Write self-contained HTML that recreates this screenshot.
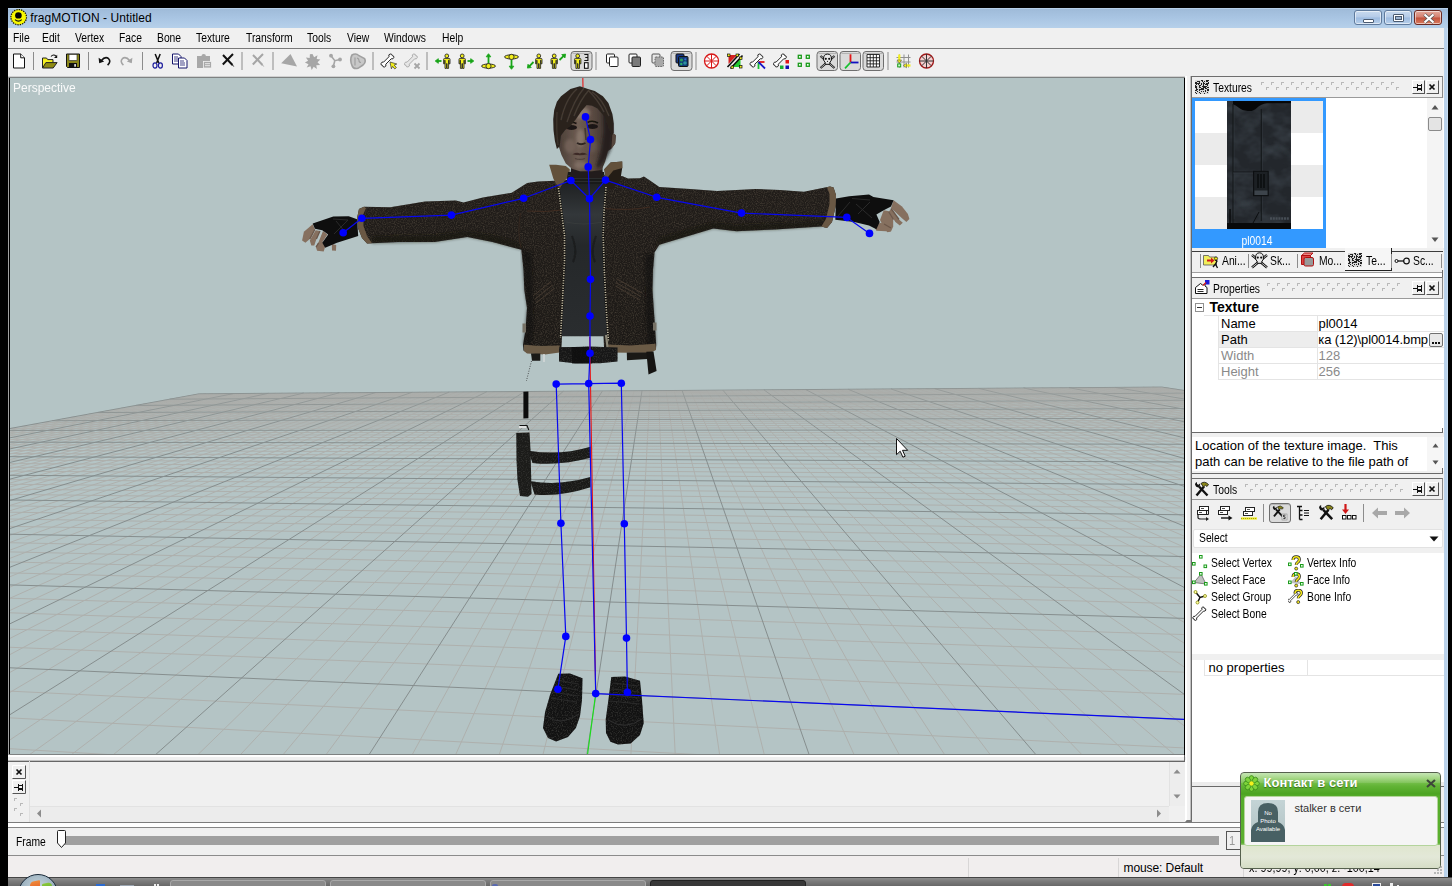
<!DOCTYPE html>
<html><head><meta charset="utf-8"><title>fragMOTION - Untitled</title>
<style>
*{box-sizing:border-box;margin:0;padding:0}
html,body{width:1452px;height:886px;overflow:hidden;background:#000}
body{font-family:"Liberation Sans",sans-serif;font-size:12px;color:#000;position:relative}
.abs{position:absolute}
#win{left:8px;top:8px;width:1440px;height:869px;background:#f0f0f0}
#title{left:0;top:0;width:1440px;height:20px;background:linear-gradient(#b6cfe9 0,#b6cfe9 1px,#9fbbd9 1px,#a9c5e3 50%,#b6d0ea 100%)}
#title .t{left:22.300px;top:2px;font-size:12px;line-height:16px;letter-spacing:0.07px;white-space:nowrap}
#rborder{left:1436px;top:20px;width:4px;height:849px;background:linear-gradient(90deg,#b9d1ea 0,#b9d1ea 70%,#c9def2 78%)}
#menu{left:0;top:20px;width:1436px;height:20px;background:#f0f0f0}
#menu span{position:absolute;top:3px;font-size:12px;line-height:14px;transform:scaleX(.86);transform-origin:0 0;white-space:nowrap}
#tbline{left:0;top:40px;width:1436px;height:1px;background:#7a7a7a}
#toolbar{left:0;top:41px;width:1436px;height:28px;background:#f0f0f0}
.sep{position:absolute;top:4px;width:1px;height:19px;background:#8a8a8a}
.pressed{position:absolute;top:1px;height:24px;border:1px solid #7a7a7a;border-radius:3px;background:#dcdcdc;box-shadow:inset 1px 1px 1px #aaa}
</style></head><body>
<style>
.cbtn{top:2px;height:15px;border:1px solid #5f7a9c;border-radius:3px;background:linear-gradient(#c9daee 0%,#b4cbe8 48%,#9dbbe0 52%,#b7cfea 100%);box-shadow:inset 0 0 0 1px rgba(255,255,255,.55)}
.cbtn i{position:absolute;border:1px solid #4a5a70;background:#fff;border-radius:1px}
.cbtn b{position:absolute;background:#9db4d2;border:1px solid #4a5a70;box-sizing:content-box;margin:-1px}
.cbtn.red{border-color:#6b2a22;background:linear-gradient(#e3a99b 0%,#d4806f 48%,#c2523c 52%,#d97a5e 100%)}
</style>
<style>
.nar{transform:scaleX(.86);transform-origin:0 0;white-space:nowrap;position:absolute;font-size:12px;line-height:14px}
.phead{position:absolute;left:1192px;width:1251px;height:21px}
.hd{position:absolute;left:1192px;width:251px;height:22px;background:#f0f0f0;border-top:1px solid #6e6e6e;border-right:1px solid #8a8a8a;border-bottom:1px solid #9a9a9a}
.hbtn{position:absolute;top:3px;width:13px;height:14px;border-right:1px solid #555;border-bottom:1px solid #555;border-left:1px solid #fff;border-top:1px solid #fff;background:#f0f0f0}
.grip{position:absolute;top:4px;height:12px}
.p13{position:absolute;font-size:13px;line-height:16px;white-space:nowrap}
.hl{position:absolute;height:1px;background:#e4e4e4}
.vl{position:absolute;width:1px;background:#e4e4e4}
</style>
<div id="win" class="abs">
<div id="title" class="abs">
 <svg class="abs" style="left:1.500px;top:1px" width="18" height="17" viewBox="0 0 18 17"><ellipse cx="8.700" cy="8.200" rx="7.800" ry="7.600" fill="#f8f800" stroke="#1a1a00" stroke-width="1.200" stroke-dasharray="1.400 1"/><ellipse cx="8.400" cy="6.400" rx="3.300" ry="3.200" fill="#050505"/><path d="M5 10.600Q8.400 13.800 11.800 10.600" fill="none" stroke="#111" stroke-width="1.100"/></svg>
 <div class="abs t">fragMOTION - Untitled</div>
 <div class="abs cbtn" style="left:1346px;width:28px"><i style="left:8px;top:8px;width:11px;height:4px"></i></div>
 <div class="abs cbtn" style="left:1376px;width:28px"><i style="left:8px;top:3px;width:11px;height:8px"></i><b style="left:11px;top:6px;width:5px;height:2px"></b></div>
 <div class="abs cbtn red" style="left:1406px;width:28px"><svg class="abs" style="left:8px;top:2px" width="12" height="11" viewBox="0 0 12 11"><path d="M1.5 1.5L10.5 9.5M10.5 1.5L1.5 9.5" stroke="#555" stroke-width="3.6"/><path d="M1.5 1.5L10.5 9.5M10.5 1.5L1.5 9.5" stroke="#fff" stroke-width="2.2"/></svg></div>
</div>
<div id="rborder" class="abs"></div>
<div id="menu" class="abs">
<span style="left:5px">File</span><span style="left:34px">Edit</span><span style="left:67px">Vertex</span><span style="left:111px">Face</span><span style="left:149px">Bone</span><span style="left:188px">Texture</span><span style="left:238px">Transform</span><span style="left:299px">Tools</span><span style="left:339px">View</span><span style="left:376px">Windows</span><span style="left:434px">Help</span>
</div>
<div id="tbline" class="abs"></div>
<div id="toolbar" class="abs">
<svg class="abs" style="left:0;top:0" width="1436" height="28" viewBox="0 0 1436 28"><g transform="translate(5,4.500)"><path d="M.5 .5h7.2l3.8 3.8v10.2h-11z" fill="#fff" stroke="#111"/><path d="M7.7 .5v3.8h3.8" fill="#fff" stroke="#111"/></g><rect x="25" y="3" width="1" height="18" fill="#8c8c8c"/><g transform="translate(34,4.500)"><path d="M.5 14.5V4.5h4l1.2 1.6h5.3v3" fill="#f4f01e" stroke="#222"/><path d="M.5 14.5l3.4-5.4h11.2l-3.9 5.4z" fill="#8e8a12" stroke="#222"/><path d="M9 3Q11.5 .2 14 2.6" fill="none" stroke="#111" stroke-width="1.1"/><path d="M15.2 1.2v3.2h-3.2z" fill="#111"/></g><g transform="translate(58,4.500)"><path d="M.5 .5h13v13.5h-12l-1-1z" fill="#8a861a" stroke="#111"/><rect x="3" y="1" width="8" height="6" fill="#fff" stroke="#222" stroke-width=".6"/><rect x="3" y="9.5" width="8" height="4.5" fill="#111"/><rect x="8.2" y="10.6" width="1.8" height="2.6" fill="#ddd"/></g><rect x="80" y="3" width="1" height="18" fill="#8c8c8c"/><g transform="translate(90,4.500)"><path d="M3.2 7.2Q7.2 2.4 10.6 5.2Q13.4 8 9.6 11.6" fill="none" stroke="#111" stroke-width="1.6"/><path d="M.6 4.2l.6 5.6 5-1.8z" fill="#111"/></g><g transform="translate(112,4.500)"><g transform="translate(13,0) scale(-1,1)"><path d="M3.2 7.2Q7.2 2.4 10.6 5.2Q13.4 8 9.6 11.6" fill="none" stroke="#a4a4a4" stroke-width="1.6"/><path d="M.6 4.2l.6 5.6 5-1.8z" fill="#a4a4a4"/></g></g><rect x="134" y="3" width="1" height="18" fill="#8c8c8c"/><g transform="translate(144,4.500)"><path d="M3.2 .5L6.8 9.5M8.2 .5L4.6 9.5" stroke="#111" stroke-width="1.5" fill="none"/><ellipse cx="3" cy="12" rx="2" ry="2.6" fill="none" stroke="#1c1c9c" stroke-width="1.2"/><ellipse cx="8.4" cy="12" rx="2" ry="2.6" fill="none" stroke="#1c1c9c" stroke-width="1.2"/></g><g transform="translate(164,4.500)"><path d="M.5 .5h6l2.5 2.5v7.5h-8.5z" fill="#fff" stroke="#14146a"/><path d="M2 3.5h4M2 5.5h5M2 7.5h5" stroke="#14146a" stroke-width=".8"/><path d="M6.5 4.5h6l2.5 2.5v7.5h-8.5z" fill="#fff" stroke="#14146a"/><path d="M8 7.5h4M8 9.5h5M8 11.5h5" stroke="#14146a" stroke-width=".8"/></g><g transform="translate(188,4.500)"><path d="M1 2.5h4.5q0-2 2.2-2t2.2 2H14v12H1z" fill="#a8a8a8"/><rect x="7.5" y="8" width="8" height="6.5" fill="#a8a8a8" stroke="#f0f0f0" stroke-width=".8"/><path d="M9 10.2h5M9 12.2h5" stroke="#f0f0f0" stroke-width=".9"/></g><g transform="translate(214,4.500)"><path d="M1 1.5L10.5 11.5M11 .5L.8 11" stroke="#111" stroke-width="2" fill="none"/><path d="M10.5 11.5l1.2 1.5" stroke="#111" stroke-width="1"/></g><rect x="233.5" y="3" width="1" height="18" fill="#8c8c8c"/><g transform="translate(244,4.500)"><path d="M1 1.5L10.5 11.5M11 .5L.8 11" stroke="#a6a6a6" stroke-width="2" fill="none"/><path d="M10.5 11.5l1.2 1.5" stroke="#a6a6a6" stroke-width="1"/></g><rect x="264.5" y="3" width="1" height="18" fill="#8c8c8c"/><g transform="translate(273,4.500)"><path d="M9.5 .5L16 13 .2 9.8z" fill="#a6a6a6"/></g><g transform="translate(296.5,4.500)"><path d="M8 .5l1.6 3.2 3.4-2-.8 3.8 3.6.6-2.8 2.6 2.6 2.8-3.8.2.6 3.8-3.2-2.2-2 3.2-1.2-3.8-3.8 1.4 1.8-3.4L.4 9l3.2-1.8L1.4 4l3.8.4.2-3.6z" fill="#a6a6a6"/></g><g transform="translate(321,4.500)"><path d="M2 2.2L5.8 7.2 11 6M5.8 7.2L4.4 12.6" stroke="#a6a6a6" stroke-width="1.6" fill="none"/><circle cx="2" cy="2.2" r="1.9" fill="#a6a6a6"/><circle cx="11" cy="6" r="1.9" fill="#a6a6a6"/><circle cx="4.4" cy="12.8" r="1.9" fill="#a6a6a6"/></g><g transform="translate(342,4.500)"><path d="M2 1.5Q6-.8 9 2.2L14.5 5Q16.5 8.5 13 11.5L8 14.8Q3 15.8 2 12Q-.5 6 2 1.5z" fill="#c8c8c8" stroke="#a0a0a0" stroke-width="1.6"/><path d="M5 4v8M7 4.5q2 .5 2 2.500t2 2" stroke="#a0a0a0" stroke-width="1.2" fill="none"/></g><rect x="364.5" y="3" width="1" height="18" fill="#8c8c8c"/><g transform="translate(373,4.500)"><g stroke="#111" stroke-width=".9" fill="#fff"><path d="M2.600 8.600L8 3.200Q7 .9 9.200 .5Q11.200 .3 11.200 2.100Q13.200 2.100 12.800 4.100Q12.300 5.900 10.200 5.300L4.800 10.700Q5.600 13 3.500 13.500Q1.500 13.700 1.500 11.900Q-.5 11.900 .1 9.900Q.7 8 2.600 8.600z"/></g><path d="M9 8.5l6.8 2-2.6 1 2.2 2.6-1.6 1.4-2.2-2.6-1.2 2.4z" fill="#f2ee1c" stroke="#333" stroke-width=".7"/></g><g transform="translate(396.5,4.500)"><g stroke="#a6a6a6" stroke-width=".9" fill="#e6e6e6"><path d="M2.600 8.600L8 3.200Q7 .9 9.200 .5Q11.200 .3 11.200 2.100Q13.200 2.100 12.800 4.100Q12.300 5.900 10.200 5.300L4.800 10.700Q5.600 13 3.500 13.500Q1.500 13.700 1.500 11.900Q-.5 11.900 .1 9.900Q.7 8 2.600 8.600z"/></g><path d="M10 10l5 5M15 10l-5 5" stroke="#a6a6a6" stroke-width="1.8"/></g><rect x="418.5" y="3" width="1" height="18" fill="#8c8c8c"/><g transform="translate(427,4.500)"><path d="M6.5 7.5L1.7 7.5" stroke="#18a418" stroke-width="1.8" fill="none"/><path d="M0.2 7.5L3.32446 5.16596L3.32446 9.83404z" fill="#18a418" stroke="#18a418" stroke-width=".8"/><g fill="#f2ee1c" stroke="#222" stroke-width=".85"><circle cx="11.8" cy="2.400" r="1.900"/><path d="M9.6 4.900h4.400q1 0 1 1v4.400h-1.100v-3.600h-.300v8.200h-1.500v-4.800h-.600v4.800h-1.500v-8.200h-.300v3.600h-1.100v-4.400q0-1 1-1z"/></g></g><g transform="translate(450,4.500)"><g fill="#f2ee1c" stroke="#222" stroke-width=".85"><circle cx="4.2" cy="2.400" r="1.900"/><path d="M2 4.900h4.400q1 0 1 1v4.400h-1.100v-3.600h-.300v8.200h-1.500v-4.800h-.600v4.800h-1.500v-8.200h-.300v3.600h-1.100v-4.400q0-1 1-1z"/></g><path d="M9.5 7.5L14.3 7.5" stroke="#18a418" stroke-width="1.8" fill="none"/><path d="M15.8 7.5L12.6755 9.83404L12.6755 5.16596z" fill="#18a418" stroke="#18a418" stroke-width=".8"/></g><g transform="translate(472.5,4.500)"><g fill="#f2ee1c" stroke="#222" stroke-width=".9"><ellipse cx="8" cy="12.6" rx="7" ry="2.1"/><circle cx="8" cy="12.6" r="2.6"/></g><path d="M8 9.5L8 1.7" stroke="#18a418" stroke-width="1.8" fill="none"/><path d="M8 0.2L10.334 3.32446L5.66596 3.32446z" fill="#18a418" stroke="#18a418" stroke-width=".8"/></g><g transform="translate(495.5,4.500)"><g fill="#f2ee1c" stroke="#222" stroke-width=".9"><ellipse cx="8" cy="3.4" rx="7" ry="2.1"/><circle cx="8" cy="3.4" r="2.6"/></g><path d="M8 6.5L8 14.3" stroke="#18a418" stroke-width="1.8" fill="none"/><path d="M8 15.8L5.66596 12.6755L10.334 12.6755z" fill="#18a418" stroke="#18a418" stroke-width=".8"/></g><g transform="translate(519,4.500)"><path d="M6.5 8.5L1.46066 13.5393" stroke="#18a418" stroke-width="1.8" fill="none"/><path d="M0.4 14.6L0.95891 10.7403L4.25974 14.0411z" fill="#18a418" stroke="#18a418" stroke-width=".8"/><g fill="#f2ee1c" stroke="#222" stroke-width=".85"><circle cx="11.8" cy="2.400" r="1.900"/><path d="M9.6 4.900h4.400q1 0 1 1v4.400h-1.100v-3.600h-.300v8.200h-1.500v-4.800h-.600v4.800h-1.500v-8.200h-.300v3.600h-1.100v-4.400q0-1 1-1z"/></g></g><g transform="translate(542,4.500)"><g fill="#f2ee1c" stroke="#222" stroke-width=".85"><circle cx="4.2" cy="2.400" r="1.900"/><path d="M2 4.900h4.400q1 0 1 1v4.400h-1.100v-3.600h-.300v8.200h-1.500v-4.800h-.600v4.800h-1.500v-8.200h-.300v3.600h-1.100v-4.400q0-1 1-1z"/></g><path d="M9.5 6.5L14.5218 1.64284" stroke="#18a418" stroke-width="1.8" fill="none"/><path d="M15.6 0.6L14.9768 4.44989L11.7315 1.09451z" fill="#18a418" stroke="#18a418" stroke-width=".8"/></g><rect x="563" y="2.500" width="21" height="19" rx="3" fill="#dadada" stroke="#6e6e6e"/><path d="M564.5 4.500h18" stroke="#b4b4b4"/><g transform="translate(565.5,4.500)"><g fill="#f2ee1c" stroke="#222" stroke-width=".85"><circle cx="4.2" cy="2.400" r="1.900"/><path d="M2 4.900h4.400q1 0 1 1v4.400h-1.100v-3.600h-.300v8.200h-1.500v-4.800h-.600v4.800h-1.500v-8.200h-.300v3.600h-1.100v-4.400q0-1 1-1z"/></g><path d="M10.8 1h3.6v3h-2.6 2.600v3h-3.600" fill="none" stroke="#111" stroke-width="1.1"/><rect x="11" y="9.200" width="3.6" height="5.6" fill="#fff" stroke="#111" stroke-width="1.1"/></g><rect x="587.5" y="3" width="1" height="18" fill="#8c8c8c"/><g transform="translate(598,4.500)"><rect x=".5" y=".5" width="8" height="9" rx="1" fill="#fff" stroke="#222"/><rect x="3.5" y="3.500" width="8.500" height="9.500" rx="1" fill="#fff" stroke="#222"/></g><g transform="translate(620.5,4.500)"><rect x=".5" y=".5" width="8" height="9" rx="1" fill="#fff" stroke="#222"/><rect x="3.5" y="3.500" width="8.500" height="9.500" rx="1" fill="#7a7a7a" stroke="#222"/></g><g transform="translate(643.5,4.500)"><rect x=".5" y=".5" width="8" height="9" rx="1" fill="#e8e8e8" stroke="#555"/><rect x="3.5" y="3.500" width="8.500" height="9.500" rx="1" fill="#a8a8a8" stroke="#666" stroke-dasharray="1.500 1"/></g><rect x="663" y="2.500" width="21" height="19" rx="3" fill="#dadada" stroke="#6e6e6e"/><path d="M664.5 4.500h18" stroke="#b4b4b4"/><g transform="translate(667.5,4.500)"><rect x=".5" y=".5" width="8" height="9" rx="1" fill="#1a3a8a" stroke="#111"/><rect x="3" y="3" width="9.500" height="10" rx="1" fill="#123c78" stroke="#111"/><circle cx="6" cy="6.500" r="1.600" fill="#2aa05a"/><circle cx="9.500" cy="9.500" r="1.800" fill="#2c8fa0"/><circle cx="9.800" cy="5.800" r="1.100" fill="#3a6ad0"/><circle cx="5.800" cy="10.500" r="1.200" fill="#2ab070"/></g><rect x="687.5" y="3" width="1" height="18" fill="#8c8c8c"/><g transform="translate(696,4.500)"><circle cx="7.500" cy="7.500" r="7" fill="#fff" stroke="#d81818" stroke-width="1.300"/><path d="M7.500 .5v14M.5 7.500h14M2.600 2.600l9.800 9.800M12.400 2.600l-9.800 9.800" stroke="#d81818" stroke-width="1"/></g><g transform="translate(719,4.500)"><path d="M1.500 1.500h8.500l-8.500 9z" fill="#d42020"/><path d="M13.500 4v9.500h-9.500z" fill="#22c832"/><path d="M.5 13.500L12.500 .5M3.500 15L15.500 2" stroke="#111" stroke-width="1.600"/><g fill="#f2ee1c" stroke="#111" stroke-width=".7"><rect x=".5" y=".5" width="2.500" height="2.500"/><rect x="9" y=".5" width="2.500" height="2.500"/><rect x="12.500" y="3.500" width="2.500" height="2.500"/><rect x="12.500" y="12" width="2.500" height="2.500"/><rect x="4" y="12.500" width="2.500" height="2.500"/></g></g><g transform="translate(742,4.500)"><g stroke="#111" stroke-width=".9" fill="#fff"><path d="M2.600 8.600L8 3.200Q7 .9 9.200 .5Q11.200 .3 11.200 2.100Q13.200 2.100 12.800 4.100Q12.300 5.900 10.200 5.300L4.800 10.700Q5.600 13 3.500 13.500Q1.500 13.700 1.500 11.900Q-.5 11.900 .1 9.900Q.7 8 2.600 8.600z"/></g><path d="M8.500 8.500h6" stroke="#e01818" stroke-width="1.800"/><path d="M8.500 8.500v7" stroke="#18c030" stroke-width="1.800"/><path d="M8.500 8.500l6.500 6.500" stroke="#1818c8" stroke-width="1.800"/></g><g transform="translate(765.5,4.500)"><g stroke="#111" stroke-width=".9" fill="#fff"><path d="M2.600 8.600L8 3.200Q7 .9 9.200 .5Q11.200 .3 11.200 2.100Q13.200 2.100 12.800 4.100Q12.300 5.900 10.200 5.300L4.800 10.700Q5.600 13 3.500 13.500Q1.500 13.700 1.500 11.900Q-.5 11.900 .1 9.900Q.7 8 2.600 8.600z"/></g><rect x="12" y="6.500" width="3.500" height="3.500" fill="#e01818"/><rect x="6.500" y="12" width="3.500" height="3.500" fill="#18b030"/><rect x="12" y="12" width="3.500" height="3.500" fill="#1010b0"/></g><g transform="translate(789.5,4.500)"><g fill="#f0fff0" stroke="#1a9a1a" stroke-width="1.300"><rect x=".8" y="1.800" width="3" height="3"/><rect x="8.800" y="1.800" width="3" height="3"/><rect x=".8" y="9.800" width="3" height="3"/><rect x="8.800" y="9.800" width="3" height="3"/></g></g><rect x="809" y="2.500" width="20.5" height="19" rx="3" fill="#dadada" stroke="#6e6e6e"/><path d="M810.5 4.500h17.5" stroke="#b4b4b4"/><rect x="832" y="2.500" width="20.5" height="19" rx="3" fill="#dadada" stroke="#6e6e6e"/><path d="M833.5 4.500h17.5" stroke="#b4b4b4"/><rect x="855" y="2.500" width="20.5" height="19" rx="3" fill="#dadada" stroke="#6e6e6e"/><path d="M856.5 4.500h17.5" stroke="#b4b4b4"/><g transform="translate(811.5,4.500)"><path d="M1 2.500L15 14.500M15 2.500L1 14.500" stroke="#111" stroke-width="2.200"/><path d="M1 2.500L15 14.500M15 2.500L1 14.500" stroke="#eee" stroke-width=".7"/><path d="M4 5.500Q4 .6 8 .6t4 4.900q0 2.200-1.600 3v2.300h-4.800v-2.300Q4 7.700 4 5.500z" fill="#e8e8e8" stroke="#111" stroke-width="1"/><circle cx="6.300" cy="5.300" r="1.100" fill="#111"/><circle cx="9.700" cy="5.300" r="1.100" fill="#111"/><path d="M8 7l-.7 1.400h1.400z" fill="#111"/></g><g transform="translate(834.5,4.500)"><path d="M8 9V.8" stroke="#e01818" stroke-width="1.800"/><path d="M8 9h8" stroke="#1010c0" stroke-width="1.800"/><path d="M8 9L2.500 14.800" stroke="#18c030" stroke-width="1.800"/></g><g transform="translate(858,4.500)"><rect x="1" y="1" width="12.500" height="12.500" fill="#fff"/><path d="M1 1h12.500M1 4.200h12.500M1 7.300h12.500M1 10.400h12.500M1 13.500h12.500M1 1v12.500M4.200 1v12.500M7.300 1v12.500M10.400 1v12.500M13.500 1v12.500" stroke="#111" stroke-width=".85"/></g><rect x="879.5" y="3" width="1" height="18" fill="#8c8c8c"/><g transform="translate(887.5,4.500)"><path d="M1 4h14M1 8.500h14M4 1v13M8.500 1v13M13 1v13" stroke="#909090" stroke-width="1"/><path d="M3.800 1v7" stroke="#f2ee1c" stroke-width="2.200"/><path d="M1.500 6.500h4.600l-2.300 3.200z" fill="#f2ee1c" stroke="#444" stroke-width=".5"/><path d="M15 12h-5" stroke="#f2ee1c" stroke-width="2.200"/><path d="M11 9.700v4.600l-3.200-2.300z" fill="#f2ee1c" stroke="#444" stroke-width=".5"/><rect x="2.200" y="10.400" width="3" height="3" fill="#caffca" stroke="#1a9a1a"/></g><g transform="translate(911,4.500)"><circle cx="7.500" cy="7.500" r="7" fill="#f4d0d0" stroke="#a01818" stroke-width="1.300"/><path d="M7.500 .5v14M.5 7.500h14M2.600 2.600l9.800 9.800M12.400 2.600l-9.800 9.800" stroke="#333" stroke-width="1"/></g></svg>
</div>
</div>
<!-- viewport border + canvas -->
<div class="abs" style="left:8px;top:76px;width:1177px;height:1px;background:#d0d0d0"></div>
<div class="abs" style="left:8px;top:77px;width:1px;height:678px;background:#a0a0a0"></div>
<div class="abs" style="left:9px;top:77px;width:1176px;height:678px;background:#7e8282"></div>
<div class="abs" style="left:9px;top:78px;width:1px;height:676px;background:#000"></div>
<div class="abs" style="left:1184px;top:78px;width:1px;height:677px;background:#000"></div>
<svg class="abs" id="vp" style="left:10px;top:78px" width="1174" height="676" viewBox="10 78 1174 676">
<defs>
<filter id="spk" x="0" y="0" width="100%" height="100%" color-interpolation-filters="sRGB"><feTurbulence type="fractalNoise" baseFrequency="0.9" numOctaves="2" seed="3" result="n"/><feColorMatrix in="n" type="matrix" values="0 0 0 0 0.30  0 0 0 0 0.27  0 0 0 0 0.23  1.700 0 0 0 -0.700" result="s"/><feComposite in="s" in2="SourceGraphic" operator="in" result="sp"/><feMerge><feMergeNode in="SourceGraphic"/><feMergeNode in="sp"/></feMerge></filter>
<filter id="spk2" x="0" y="0" width="100%" height="100%" color-interpolation-filters="sRGB"><feTurbulence type="fractalNoise" baseFrequency="0.8" numOctaves="2" seed="9" result="n"/><feColorMatrix in="n" type="matrix" values="0 0 0 0 0.22  0 0 0 0 0.22  0 0 0 0 0.21  2.400 0 0 0 -1.100" result="s"/><feComposite in="s" in2="SourceGraphic" operator="in" result="sp"/><feMerge><feMergeNode in="SourceGraphic"/><feMergeNode in="sp"/></feMerge></filter>
<filter id="soft"><feGaussianBlur stdDeviation="0.6"/></filter>
<filter id="soft2"><feGaussianBlur stdDeviation="1.6"/></filter>
<linearGradient id="face" x1="0" y1="0" x2="1" y2="0"><stop offset="0" stop-color="#4a3e37"/><stop offset=".35" stop-color="#6e5d53"/><stop offset=".6" stop-color="#5a4a42"/><stop offset="1" stop-color="#2c2521"/></linearGradient>
<linearGradient id="shirt" x1="0" y1="0" x2="0" y2="1"><stop offset="0" stop-color="#1d1f20"/><stop offset=".22" stop-color="#33373a"/><stop offset=".42" stop-color="#25282a"/><stop offset="1" stop-color="#2a2d2f"/></linearGradient>
<linearGradient id="jk" x1="0" y1="0" x2="0" y2="1"><stop offset="0" stop-color="#211d1a"/><stop offset="1" stop-color="#1c1916"/></linearGradient>
<linearGradient id="haze" gradientUnits="userSpaceOnUse" x1="0" y1="388" x2="0" y2="450"><stop offset="0" stop-color="#a8a9a6" stop-opacity=".55"/><stop offset=".35" stop-color="#a8a9a6" stop-opacity=".28"/><stop offset="1" stop-color="#a8a9a6" stop-opacity="0"/></linearGradient>
</defs>
<rect x="10" y="78" width="1174" height="676" fill="#b4c4c5"/>
<g fill="none" stroke-width="1" shape-rendering="auto">
<path stroke="#aeb0ad" d="M-1986.6 802.0L206.0 393.8M-1962.0 804.7L212.9 393.7M-1937.1 807.5L219.7 393.7M-1911.8 810.3L226.6 393.6M-1860.0 816.0L240.5 393.5M-1833.5 818.9L247.4 393.5M-1806.6 821.9L254.4 393.4M-1779.3 824.9L261.4 393.4M-1723.4 831.1L275.4 393.3M-1694.8 834.2L282.4 393.2M-1665.7 837.4L289.5 393.2M-1636.2 840.7L296.5 393.1M-1575.7 847.3L310.7 393.0M-1544.7 850.8L317.8 393.0M-1513.2 854.2L325.0 392.9M-1481.1 857.8L332.1 392.9M-1415.4 865.0L346.5 392.8M-1381.7 868.7L353.7 392.7M-1347.4 872.5L360.9 392.7M-1312.5 876.4L368.2 392.6M-1240.8 884.3L382.7 392.5M-1204.0 888.3L390.0 392.5M-1166.5 892.5L397.4 392.4M-1128.4 896.7L404.7 392.4M-1049.9 905.3L419.5 392.3M-1009.6 909.8L426.8 392.2M-968.5 914.3L434.3 392.2M-926.6 918.9L441.7 392.1M-840.4 928.4L456.6 392.0M-796.0 933.3L464.1 392.0M-750.8 938.3L471.6 391.9M-704.6 943.4L479.2 391.8M-609.4 953.9L494.3 391.7M-560.3 959.3L501.9 391.7M-510.2 964.8L509.5 391.6M-459.0 970.5L517.1 391.6M-353.3 982.1L532.5 391.5M-298.8 988.1L540.2 391.4M-243.0 994.3L547.9 391.4M-186.0 1000.6L555.6 391.3M-68.0 1013.6L571.1 391.2M-6.9 1020.3L578.9 391.2M55.5 1027.2L586.7 391.1M119.5 1034.3L594.6 391.0M252.0 1048.9L610.3 390.9M320.8 1056.5L618.2 390.9M391.2 1064.2L626.1 390.8M463.4 1072.2L634.1 390.8M613.4 1088.7L650.0 390.7M691.4 1097.3L658.0 390.6M771.4 1106.1L666.0 390.5M853.6 1115.2L674.1 390.5M1024.8 1134.1L690.2 390.4M1114.0 1143.9L698.3 390.3M1205.7 1154.0L706.5 390.3M1300.1 1164.4L714.6 390.2M1497.3 1186.2L731.0 390.1M1600.3 1197.5L739.2 390.0M1706.5 1209.2L747.5 390.0M1816.0 1221.3L755.7 389.9M2045.5 1246.6L772.3 389.8M2165.9 1259.9L780.7 389.7M2290.2 1273.6L789.0 389.7M2418.8 1287.8L797.4 389.6M2689.4 1317.6L814.2 389.5M2831.8 1333.3L822.7 389.4M2979.5 1349.6L831.1 389.4M3132.6 1366.5L839.6 389.3M3456.2 1402.2L856.7 389.2M3627.5 1421.1L865.3 389.2M3805.6 1440.7L873.9 389.1M3991.0 1461.1L882.5 389.0M4385.1 1504.6L899.8 388.9M4594.9 1527.7L908.5 388.8M4814.0 1551.9L917.2 388.8M5043.0 1577.1L925.9 388.7M5533.4 1631.2L943.4 388.6M5796.4 1660.2L952.2 388.5M6072.4 1690.6L961.1 388.5M6362.5 1722.6L969.9 388.4M6989.2 1791.7L987.7 388.3M7328.4 1829.1L996.7 388.2M7686.9 1868.7L1005.6 388.2M8066.2 1910.5L1014.6 388.1M8895.2 2001.9L1032.6 388.0M9349.4 2052.0L1041.7 387.9M9833.5 2105.4L1050.8 387.9M10350.6 2162.4L1059.9 387.8M11498.4 2288.9L1078.2 387.7M12137.6 2359.4L1087.4 387.6M12827.3 2435.5L1096.6 387.5M13573.7 2517.8L1105.8 387.5M15266.9 2704.5L1124.4 387.3M16232.5 2810.9L1133.7 387.3M17293.1 2927.9L1143.1 387.2M18463.4 3056.9L1152.5 387.1M-2010.8 799.4L19761.4 3200.0M-1833.2 766.8L13071.2 2188.2M-1677.7 738.2L9851.0 1701.2M-1418.6 690.7L6710.0 1226.2M-1309.6 670.7L5826.7 1092.6M-1211.4 652.7L5168.3 993.0M-1122.5 636.4L4658.6 915.9M-968.1 608.0L3920.9 804.3M-900.5 595.6L3645.3 762.7M-838.3 584.2L3412.7 727.5M-780.9 573.7L3213.6 697.4M-678.4 554.8L2890.8 648.6M-632.4 546.4L2758.1 628.5M-589.5 538.5L2640.3 610.7M-549.4 531.2L2534.9 594.7M-476.5 517.8L2354.6 567.5M-443.2 511.7L2276.8 555.7M-411.9 505.9L2205.8 545.0M-382.3 500.5L2140.7 535.1M-327.7 490.5L2025.8 517.7M-302.5 485.9L1974.7 510.0M-278.6 481.5L1927.3 502.8M-255.9 477.3L1883.2 496.2M-213.5 469.5L1803.5 484.1M-193.8 465.9L1767.4 478.7M-175.0 462.5L1733.5 473.5M-156.9 459.2L1701.7 468.7M-123.2 453.0L1643.2 459.9M-107.3 450.0L1616.4 455.8M-92.1 447.2L1591.0 452.0M-77.4 444.6L1566.9 448.3M-49.8 439.5L1522.2 441.6M-36.8 437.1L1501.5 438.4M-24.2 434.8L1481.7 435.4M-12.1 432.6L1462.8 432.6M10.9 428.4L1427.6 427.3M21.8 426.4L1411.1 424.8M32.3 424.4L1395.2 422.4M42.5 422.6L1380.1 420.1M61.9 419.0L1351.5 415.8M71.2 417.3L1338.1 413.7M80.2 415.6L1325.1 411.8M88.8 414.0L1312.7 409.9M105.5 411.0L1289.1 406.3M113.4 409.5L1277.9 404.6M121.2 408.1L1267.2 403.0M128.7 406.7L1256.7 401.4M143.1 404.1L1236.9 398.4M150.0 402.8L1227.5 397.0M156.7 401.6L1218.4 395.6M163.2 400.4L1209.6 394.3M175.8 398.1L1192.7 391.7M181.9 397.0L1184.6 390.5M187.8 395.9L1176.8 389.3M193.5 394.8L1169.2 388.2"/>
<path stroke="#868e8e" d="M-2010.8 799.4L199.2 393.8M-1886.1 813.1L233.5 393.6M-1751.6 828.0L268.4 393.3M-1606.2 844.0L303.6 393.1M-1448.5 861.4L339.3 392.8M-1276.9 880.3L375.5 392.6M-1089.5 901.0L412.1 392.3M-883.9 923.6L449.2 392.1M-657.5 948.6L486.7 391.8M-406.7 976.2L524.8 391.5M-127.6 1007.0L563.3 391.3M185.0 1041.5L602.4 391.0M537.5 1080.3L642.0 390.7M938.1 1124.5L682.1 390.4M1397.2 1175.2L722.8 390.1M1928.9 1233.8L764.0 389.9M2551.8 1302.5L805.8 389.6M3291.4 1384.0L848.2 389.3M4184.0 1482.4L891.1 389.0M5282.5 1603.6L934.7 388.7M6667.7 1756.3L978.8 388.4M8468.2 1954.8L1023.6 388.0M10904.2 2223.4L1069.0 387.7M14384.0 2607.1L1115.1 387.4M19761.4 3200.0L1161.9 387.1M-1540.6 713.1L7957.1 1414.8M-1041.8 621.5L4252.3 854.5M-727.7 563.9L3041.3 671.3M-511.8 524.3L2440.2 580.4M-354.2 495.4L2080.9 526.1M-234.2 473.3L1842.0 489.9M-139.7 456.0L1671.6 464.2M-63.4 442.0L1544.0 444.9M-0.4 430.4L1444.8 429.9M52.4 420.7L1365.5 417.9M97.3 412.5L1300.7 408.1M136.0 405.4L1246.7 399.9M169.6 399.2L1201.0 393.0M199.2 393.8L1161.9 387.1"/>
</g>
<path d="M199.2 393.8L1161.9 387.1L19761.4 3200.0L-2010.8 799.4z" fill="url(#haze)"/>
<g filter="url(#spk)"><path d="M549.4 181.0L538.0 181.5L527.2 183.1L511.7 192.8L482.8 197.6L463.5 202.4L455.8 200.5L425.0 201.5L390.3 207.2L364.0 206.8L359.0 209.0L357.3 217.0L358.0 228.0L362.0 238.0L367.1 243.5L372.0 243.3L398.0 242.0L434.6 242.0L467.4 237.1L492.5 242.0L521.4 249.7L523.5 270.0L524.3 290.0L527.0 308.0L525.5 330.0L523.0 344.8L523.5 350.5L527.0 352.5L559.1 351.0L608.5 351.5L650.0 351.5L656.0 349.5L656.2 344.8L653.7 308.0L652.5 290.0L653.0 270.0L654.5 252.6L659.3 244.8L685.0 237.0L713.3 228.5L736.4 231.3L775.0 229.4L821.3 226.5L827.0 228.0L832.0 222.0L836.0 205.0L836.0 195.0L833.5 187.5L830.0 186.5L803.9 191.8L780.0 190.0L755.7 188.9L717.1 190.9L690.0 189.0L659.3 187.0L650.0 180.5L643.9 176.4L640.0 178.3L628.0 178.5L622.0 176.0L605.0 180.0L570.0 180.0z" fill="url(#jk)"/></g>
<path d="M372.0 236.0L434.0 235.0L467.0 231.0L492.0 235.0L521.0 243.0L521.4 249.7L492.5 242.0L467.4 237.1L434.6 242.0L372.0 243.3z" fill="#141210" opacity=".55" filter="url(#soft2)"/>
<path d="M827.0 221.0L775.0 223.0L736.0 225.0L713.0 222.0L659.0 238.0L654.5 252.6L659.3 244.8L713.3 228.5L736.4 231.3L775.0 229.4L821.3 226.5z" fill="#141210" opacity=".55" filter="url(#soft2)"/>
<path d="M521.4 249.7L532.0 252.0L534.0 330.0L531.0 346.0L523.0 344.8L527.0 308.0L524.3 290.0z" fill="#100e0c" opacity=".5" filter="url(#soft2)"/>
<path d="M654.5 252.6L645.0 254.0L646.0 330.0L648.0 346.0L656.2 344.8L653.7 308.0L652.5 290.0z" fill="#100e0c" opacity=".5" filter="url(#soft2)"/>
<path d="M364.0 206.8L359.0 209.0L357.3 217.0L358.0 228.0L362.0 238.0L367.1 243.5L372.0 243.3L367.0 236.0L363.5 226.0L363.0 215.0L366.0 208.0z" fill="#6a5844"/>
<path d="M830.0 186.5L833.5 187.5L836.0 195.0L836.0 205.0L832.0 222.0L827.0 228.0L821.3 226.5L826.0 219.0L829.5 204.0L829.5 194.0L827.0 187.2z" fill="#6a5844"/>
<path d="M524.0 344.8L540.0 346.0L559.6 345.5L559.6 352.5L545.0 354.5L527.0 353.5L524.0 351.0z" fill="#6b5a45" filter="url(#soft)"/>
<path d="M608.0 344.5L630.0 345.5L655.5 343.7L656.0 350.0L650.0 353.0L609.0 352.5z" fill="#6b5a45" filter="url(#soft)"/>
<path d="M566.0 180.0L604.0 180.0L605.7 186.7L603.5 215.0L602.9 234.7L604.0 270.0L606.0 310.0L608.0 336.5L561.0 336.5L563.0 300.0L565.0 260.0L564.8 234.7L562.0 210.0L559.5 190.0z" fill="url(#shirt)"/>
<path d="M566 222Q584 226 602 222" stroke="#3a3d3d" stroke-width="1.2" fill="none" opacity=".8"/>
<path d="M572 236Q578 252 573 262M596 236Q590 252 595 262" stroke="#141515" stroke-width="2" fill="none" opacity=".6" filter="url(#soft)"/>
<path d="M562.0 336.3L603.5 336.3L604.0 347.3L561.5 347.3z" fill="#b4c4c5"/>
<path d="M558.5 188.0L561.5 212.0L564.5 235.0L564.5 262.0L562.5 300.0L560.5 338.0" fill="none" stroke="#0e0d0b" stroke-width="2.300"/>
<path d="M558.5 188.0L561.5 212.0L564.5 235.0L564.5 262.0L562.5 300.0L560.5 338.0" fill="none" stroke="#c4bca4" stroke-width="1.700" stroke-dasharray="1.200 1.300"/>
<path d="M606.0 187.0L604.0 212.0L603.2 235.0L604.3 270.0L606.3 310.0L608.5 342.0" fill="none" stroke="#0e0d0b" stroke-width="2.300"/>
<path d="M606.0 187.0L604.0 212.0L603.2 235.0L604.3 270.0L606.3 310.0L608.5 342.0" fill="none" stroke="#c4bca4" stroke-width="1.700" stroke-dasharray="1.200 1.300"/>
<path d="M527 211Q545 212.500 562 210M605 208.500Q628 211 650 207" stroke="#4a2f22" stroke-width=".9" fill="none" opacity=".8"/>
<path d="M533 296L551 281.500M534.5 299.500L552.5 285M536 303L554 288.500" stroke="#4c4034" stroke-width="1" fill="none" opacity=".8"/>
<path d="M617 279L642 293M616 282.500L641 296.500M615.5 286L640 300" stroke="#4c4034" stroke-width="1" fill="none" opacity=".8"/>
<path d="M520.500 213Q517 232 521 248" stroke="#3a2a20" stroke-width="1" fill="none" opacity=".7"/>
<rect x="522.500" y="323.500" width="3.500" height="9" fill="#777266"/><rect x="653" y="322.500" width="3.500" height="8" fill="#777266"/>
<g filter="url(#spk2)"><path d="M559.0 347.6L590.0 346.5L617.5 347.6L617.5 361.5L600.0 363.3L575.0 363.3L559.0 361.5z" fill="#171717"/></g>
<rect x="572" y="347" width="20" height="16.500" fill="#0e0e0e" opacity=".8"/>
<path d="M544 354v8" stroke="#d4d8d8" stroke-width="1.600"/>
<path d="M606 335l1.500 12" stroke="#8a8676" stroke-width="2.200"/>
<path d="M531.0 353.6L540.3 353.6L540.3 360.8L532.0 360.8z" fill="#1a1916"/>
<path d="M626.8 352.5L647.7 352.5L647.7 359.0L627.0 360.2z" fill="#1a1916"/>
<path d="M646.3 351.8L653.5 351.5L656.6 371.0L648.5 374.5z" fill="#151412"/>
<path d="M531.500 361L526.400 381" stroke="#333" stroke-width=".8" stroke-dasharray="1 1.500" fill="none"/>
<path d="M549.2 164.8L556.0 164.8L565.8 166.1L569.8 169.2L569.4 176.0L564.9 180.4L560.0 188.0L556.0 184.0L553.3 178.6z" fill="#64513b" filter="url(#soft)"/>
<path d="M604.3 169.2L610.6 162.5L622.2 161.6L622.2 167.9L620.4 179.5L612.0 190.0L606.5 187.0L606.0 180.0z" fill="#241d16"/>
<path d="M604.3 169.2L610.6 162.5L622.2 161.6L622.4 167.9L613.3 170.6L608.8 176.0L606.0 180.0z" fill="#64513b" filter="url(#soft)"/>
<path d="M568.0 172.0L604.0 172.0L606.0 184.0L566.0 184.0z" fill="#191a1a"/>
<path d="M568 175.500h37M567.500 178.500h38M567 181.500h38.500" stroke="#303232" stroke-width=".8"/>
<g filter="url(#soft)">
<path d="M572.0 160.0L602.0 160.0L603.0 178.0L570.0 178.0z" fill="#241f1c"/>
<path d="M558.2 128.0L558.6 146.0L561.5 155.0L565.8 163.4L572.0 168.8L580.0 171.2L592.1 171.2L601.6 170.0L605.2 161.6L607.9 151.0L611.1 149.1L615.1 143.7L615.8 135.6L612.4 132.9L611.1 116.6L600.0 104.0L581.3 102.0L566.0 110.0z" fill="url(#face)"/>
</g>
<g filter="url(#soft2)">
<ellipse cx="581" cy="113" rx="9" ry="6" fill="#8a7a6e" opacity=".9"/>
<ellipse cx="580.500" cy="138" rx="4" ry="9" fill="#8c7b6e" opacity=".8"/>
<ellipse cx="570" cy="146" rx="5.500" ry="7" fill="#75645a" opacity=".8"/>
<ellipse cx="592" cy="146" rx="5" ry="7" fill="#6a594f" opacity=".7"/>
<ellipse cx="581" cy="165" rx="7" ry="3.500" fill="#85746a" opacity=".75"/>
<path d="M603.0 112.0L611.1 116.6L612.4 132.9L611.1 149.1L607.0 157.3L600.2 166.8L596.0 168.0L601.0 150.0L603.5 132.0z" fill="#1f1a17" opacity=".8"/>
</g>
<g filter="url(#soft)">
<ellipse cx="571.500" cy="127.500" rx="5.500" ry="2.600" fill="#1e1815"/>
<ellipse cx="592.500" cy="126.500" rx="5.500" ry="2.600" fill="#1e1815"/>
<path d="M566 123.500q5-2.500 10.500 0M587.500 122.500q5-2.500 10.500 .5" stroke="#17120f" stroke-width="1.500" fill="none"/>
<path d="M577 143q4 2.500 8.500 0" stroke="#2e2520" stroke-width="1.800" fill="none"/>
<path d="M585 128l1 12" stroke="#3a2f29" stroke-width="1.500" fill="none" opacity=".8"/>
<path d="M572.500 154.200q4.500-2.400 7.300-.8q3-1.600 7.500 .8q-7.400 2.200-14.800 0z" fill="#3c2b27"/>
<path d="M575 158.500q5 1.800 10 0" stroke="#3a2e28" stroke-width="1.200" fill="none" opacity=".6"/>
<path d="M612.4 133.0L615.8 135.0L615.3 143.0L611.5 148.5z" fill="#56463d"/>
<path d="M554.2 109.9L556.9 101.7L561.0 96.3L570.4 88.9L579.9 86.2L588.0 88.9L594.8 90.9L602.9 96.3L608.4 103.1L612.4 113.9L613.8 123.4L613.8 132.9L611.7 135.6L608.4 127.5L604.3 116.6L597.5 108.5L592.1 105.8L586.7 105.1L581.3 111.2L575.9 119.3L570.4 126.1L565.0 130.2L561.0 135.6L559.6 146.4L556.9 149.1L554.9 141.0L553.5 130.2L553.2 119.3z" fill="#2a241f"/>
<path d="M577 89Q566 98 561 120M584 88Q574 100 567 122M589 90Q580 100 574 116M592 92Q602 98 609 116M588 90Q598 100 604 112" stroke="#4a4036" stroke-width="1.300" fill="none" opacity=".85"/>
<path d="M557 112Q556 130 558 145" stroke="#3e352d" stroke-width="1.500" fill="none" opacity=".8"/>
</g>
<g filter="url(#soft)">
<path d="M312.7 224.3L303.9 231.7L302.1 240.5L305.4 242.7L309.8 239.0L314.9 229.5z" fill="#86705f"/>
<path d="M315.7 230.2L309.8 240.5L311.3 245.6L314.3 245.6L316.4 239.0L320.0 231.0z" fill="#86705f"/>
<path d="M323.0 231.0L318.6 242.0L315.7 246.4L317.1 250.8L323.7 251.5L325.2 246.4L322.5 242.0L327.4 234.6z" fill="#86705f"/>
<path d="M331.8 244.0L336.2 244.9L336.0 250.8L332.0 250.5z" fill="#86705f"/>
<path d="M309.800 239l5-9.500M316.400 239l3.600-8M318.600 243l-2.500 4" stroke="#6b574a" stroke-width="1.300" fill="none"/>
</g>
<path d="M312.7 223.6L333.3 216.6L348.7 216.3L357.1 219.2L358.2 236.1L337.0 242.7L325.2 247.8L322.3 242.7L328.2 234.6L322.3 230.2L314.9 228.7z" fill="#0e0e0e"/>
<path d="M333 219l15 1M336 221l10 12M348 220l-14 14" stroke="#2a2a2a" stroke-width="1" fill="none"/>
<g filter="url(#soft)">
<path d="M893.6 200.3L902.0 206.5L907.9 213.9L909.4 219.0L906.4 222.0L902.0 218.3L891.0 208.0z" fill="#86705f"/>
<path d="M891.0 208.7L898.4 219.0L902.8 222.7L899.8 225.6L895.4 222.0L888.8 211.7z" fill="#86705f"/>
<path d="M883.7 210.2L888.1 211.0L893.2 219.0L893.2 226.4L891.0 231.5L887.4 232.2L883.0 226.0L880.0 220.0z" fill="#86705f"/>
<path d="M879.7 222.7L883.7 223.4L891.0 227.8L890.3 231.5L876.4 230.8L874.9 227.8z" fill="#86705f"/>
<path d="M891 208.500l8 11M888.500 211.500l5 8M884 224l7 4" stroke="#6b574a" stroke-width="1.300" fill="none"/>
</g>
<path d="M836.0 198.5L849.2 196.3L869.0 194.4L873.4 197.0L893.6 200.3L891.0 206.5L883.7 210.2L876.4 214.6L879.7 222.0L876.4 229.3L869.0 225.6L854.3 222.0L835.3 219.8z" fill="#0e0e0e"/>
<path d="M852 198.500l18 1.500M850 202l-12 14M856 204l16 14M870 202l-12 12" stroke="#2a2a2a" stroke-width="1" fill="none"/>
<path d="M523.4 391.8L528.4 391.5L528.4 418.2L523.4 418.5z" fill="#0c0c0c"/>
<path d="M519.500 425.500h7.500l1.800 4.500" stroke="#111" stroke-width="1.100" fill="none"/><path d="M519 427h7" stroke="#eee" stroke-width="1.600"/>
<g filter="url(#spk2)"><path d="M516.3 433.0L529.5 432.4L530.5 450.0L531.0 470.0L531.5 494.0L528.0 496.8L520.0 496.0L517.5 480.0L516.5 460.0z" fill="#1b1b19"/></g>
<g filter="url(#spk2)"><path d="M528.400 450.700Q560 456 590.400 446.700L590.400 457.800Q560 466 532.500 462.900z" fill="#191917"/><path d="M530.500 481.200Q560 486 590.400 477.100L590.400 487.300Q560 497 534.500 494.400z" fill="#191917"/></g>
<g filter="url(#spk2)"><path d="M558.3 673.8L570.0 673.5L582.5 678.2L582.0 700.0L580.0 716.0L575.9 728.0L568.0 737.0L556.1 741.5L548.0 738.0L543.0 728.0L545.1 712.0L550.0 695.0z" fill="#121212"/><path d="M611.3 677.0L625.0 676.5L640.0 680.7L642.0 700.0L643.7 723.2L640.0 735.0L630.7 743.6L618.0 744.5L610.4 741.7L606.0 733.0L605.7 719.5L608.0 703.0z" fill="#121212"/></g>
<path d="M547 716Q560 727 579 714M608 720Q625 731 642 719" stroke="#303030" stroke-width="1" fill="none"/>
<path d="M556 680l22 4M554 686l24 4M552 692l26 4M551 698l26 4M613 683l25 3M612 689l27 3M611 695l28 3M610 701l29 3" stroke="#2c2c2c" stroke-width="1.200" fill="none" opacity=".9"/>
<path d="M582.800 77L583 87M589.700 337L595.700 693.600" stroke="#e81818" stroke-width="1.100" fill="none"/>
<path d="M595.700 693.600L587.600 754" stroke="#18e018" stroke-width="1.100" fill="none"/>
<path d="M585.5 116.9L590.5 139.6M590.5 139.6L588.2 166.9M588.2 166.9L589.5 198.7M589.5 198.7L570.9 180.5M589.5 198.7L605.5 180.1M570.9 180.5L523.6 198.3M523.6 198.3L451.4 215.1M451.4 215.1L361.8 218.3M361.8 218.3L343.2 232.8M605.5 180.1L656.7 197.3M656.7 197.3L741.5 213.1M741.5 213.1L846.8 217.4M846.8 217.4L869.5 233.4M589.5 198.7L590.5 279.2M590.5 279.2L590.0 316.0M590.0 316.0L590.0 353.3M590.0 353.3L588.7 383.6M588.7 383.6L556.2 384.1M588.7 383.6L621.3 383.2M556.2 384.1L560.9 523.2M560.9 523.2L565.8 636.4M565.8 636.4L557.9 689.2M621.3 383.2L624.3 523.7M624.3 523.7L626.5 638.1M626.5 638.1L627.4 692.3M588.7 383.6L595.7 693.6M595.700 693.600L1184 719.400" stroke="#0808f0" stroke-width="1.200" fill="none"/>
<g fill="#0000ff"><circle cx="585.5" cy="116.9" r="3.800"/><circle cx="590.5" cy="139.6" r="3.800"/><circle cx="588.2" cy="166.9" r="3.800"/><circle cx="570.9" cy="180.5" r="3.800"/><circle cx="605.5" cy="180.1" r="3.800"/><circle cx="589.5" cy="198.7" r="3.800"/><circle cx="523.6" cy="198.3" r="3.800"/><circle cx="451.4" cy="215.1" r="3.800"/><circle cx="361.8" cy="218.3" r="3.800"/><circle cx="343.2" cy="232.8" r="3.800"/><circle cx="656.7" cy="197.3" r="3.800"/><circle cx="741.5" cy="213.1" r="3.800"/><circle cx="846.8" cy="217.4" r="3.800"/><circle cx="869.5" cy="233.4" r="3.800"/><circle cx="590.5" cy="279.2" r="3.800"/><circle cx="590.0" cy="316.0" r="3.800"/><circle cx="590.0" cy="353.3" r="3.800"/><circle cx="588.7" cy="383.6" r="3.800"/><circle cx="556.2" cy="384.1" r="3.800"/><circle cx="621.3" cy="383.2" r="3.800"/><circle cx="560.9" cy="523.2" r="3.800"/><circle cx="624.3" cy="523.7" r="3.800"/><circle cx="565.8" cy="636.4" r="3.800"/><circle cx="626.5" cy="638.1" r="3.800"/><circle cx="557.9" cy="689.2" r="3.800"/><circle cx="627.4" cy="692.3" r="3.800"/><circle cx="595.7" cy="693.6" r="3.800"/></g>
<path d="M896.500 438.500v16.200l3.700-3.500 2.700 6 2.300-1-2.700-5.900h5.200z" fill="#fff" stroke="#111" stroke-width="1"/>
</svg>
<div class="abs" style="left:13px;top:81px;font-size:12px;line-height:14px;color:#fff;opacity:.93">Perspective</div>
<div class="abs" style="left:1185px;top:76px;width:2px;height:746px;background:#fff"></div><div class="abs" style="left:1187px;top:76px;width:3px;height:746px;background:#f2f2f2"></div><div class="abs" style="left:1190px;top:76px;width:1px;height:746px;background:#c0c0c0"></div>
<div class="abs" style="left:1191px;top:76px;width:1px;height:746px;background:#6a6a6a"></div>
<div class="abs" style="left:1192px;top:76px;width:252px;height:712px;background:#f0f0f0"></div>
<div class="hd" style="top:76px"><div class="abs" style="left:2px;top:2px;width:16px;height:16px"><svg width="16" height="16" viewBox="0 0 16 16" shape-rendering="crispEdges"><rect x="1" y="1" width="14" height="14" fill="#d8d8d8"/><path d="M7 1h1v1h-1zM8 1h1v1h-1zM12 1h1v1h-1zM13 1h1v1h-1zM14 1h1v1h-1zM3 2h1v1h-1zM4 2h1v1h-1zM5 2h1v1h-1zM8 2h1v1h-1zM10 2h1v1h-1zM12 2h1v1h-1zM13 2h1v1h-1zM1 3h1v1h-1zM2 3h1v1h-1zM5 3h1v1h-1zM9 3h1v1h-1zM14 3h1v1h-1zM1 4h1v1h-1zM2 4h1v1h-1zM3 4h1v1h-1zM4 4h1v1h-1zM5 4h1v1h-1zM7 4h1v1h-1zM9 4h1v1h-1zM10 4h1v1h-1zM12 4h1v1h-1zM13 4h1v1h-1zM14 4h1v1h-1zM2 5h1v1h-1zM4 5h1v1h-1zM7 5h1v1h-1zM9 5h1v1h-1zM11 5h1v1h-1zM12 5h1v1h-1zM13 5h1v1h-1zM1 6h1v1h-1zM5 6h1v1h-1zM6 6h1v1h-1zM9 6h1v1h-1zM13 6h1v1h-1zM1 7h1v1h-1zM2 7h1v1h-1zM5 7h1v1h-1zM8 7h1v1h-1zM9 7h1v1h-1zM10 7h1v1h-1zM11 7h1v1h-1zM12 7h1v1h-1zM1 8h1v1h-1zM2 8h1v1h-1zM5 8h1v1h-1zM6 8h1v1h-1zM9 8h1v1h-1zM10 8h1v1h-1zM11 8h1v1h-1zM13 8h1v1h-1zM14 8h1v1h-1zM2 9h1v1h-1zM7 9h1v1h-1zM8 9h1v1h-1zM9 9h1v1h-1zM11 9h1v1h-1zM12 9h1v1h-1zM2 10h1v1h-1zM3 10h1v1h-1zM5 10h1v1h-1zM6 10h1v1h-1zM7 10h1v1h-1zM8 10h1v1h-1zM9 10h1v1h-1zM13 10h1v1h-1zM14 10h1v1h-1zM1 11h1v1h-1zM2 11h1v1h-1zM5 11h1v1h-1zM11 11h1v1h-1zM13 11h1v1h-1zM14 11h1v1h-1zM3 12h1v1h-1zM7 12h1v1h-1zM9 12h1v1h-1zM11 12h1v1h-1zM1 13h1v1h-1zM5 13h1v1h-1zM13 13h1v1h-1zM2 14h1v1h-1zM6 14h1v1h-1zM10 14h1v1h-1z" fill="#222"/></svg></div><div class="nar" style="left:21px;top:4px">Textures</div><div class="hbtn" style="left:220px"><svg width="11" height="12" viewBox="0 0 11 12" style="position:absolute;left:0;top:0"><path d="M0 6h4M4 2.500v7M4 4h5M4 8h5M8.500 2.500v7M4 7h5" stroke="#111" stroke-width="1" fill="none" shape-rendering="crispEdges"/></svg></div><div class="hbtn" style="left:234px"><svg width="11" height="12" viewBox="0 0 11 12" style="position:absolute;left:0;top:0"><path d="M2.500 3.500l5 5M7.500 3.500l-5 5" stroke="#111" stroke-width="1.700" fill="none"/></svg></div></div>
<svg class="abs" style="left:1260px;top:81px" width="144" height="12" viewBox="0 0 144 12"><g stroke="#b9b9b9" stroke-width="1" fill="none" shape-rendering="crispEdges"><path d="M1.5 3.5v-2.500h2.500"/><path d="M6.5 8.5v-2.500h2.500"/><path d="M11.5 3.5v-2.500h2.500"/><path d="M16.5 8.5v-2.500h2.500"/><path d="M21.5 3.5v-2.500h2.500"/><path d="M26.5 8.5v-2.500h2.500"/><path d="M31.5 3.5v-2.500h2.500"/><path d="M36.5 8.5v-2.500h2.500"/><path d="M41.5 3.5v-2.500h2.500"/><path d="M46.5 8.5v-2.500h2.500"/><path d="M51.5 3.5v-2.500h2.500"/><path d="M56.5 8.5v-2.500h2.500"/><path d="M61.5 3.5v-2.500h2.500"/><path d="M66.5 8.5v-2.500h2.500"/><path d="M71.5 3.5v-2.500h2.500"/><path d="M76.5 8.5v-2.500h2.500"/><path d="M81.5 3.5v-2.500h2.500"/><path d="M86.5 8.5v-2.500h2.500"/><path d="M91.5 3.5v-2.500h2.500"/><path d="M96.5 8.5v-2.500h2.500"/><path d="M101.5 3.5v-2.500h2.500"/><path d="M106.5 8.5v-2.500h2.500"/><path d="M111.5 3.5v-2.500h2.500"/><path d="M116.5 8.5v-2.500h2.500"/><path d="M121.5 3.5v-2.500h2.500"/><path d="M126.5 8.5v-2.500h2.500"/><path d="M131.5 3.5v-2.500h2.500"/><path d="M136.5 8.5v-2.500h2.500"/></g></svg>
<div class="abs" style="left:1192px;top:98px;width:252px;height:150px;background:#fff"></div>
<div class="abs" style="left:1192px;top:98px;width:134px;height:150px;background:#3399ff"></div>
<svg class="abs" style="left:1195px;top:101px" width="128" height="128" viewBox="0 0 128 128"><defs><filter id="tn" x="0" y="0" width="100%" height="100%" color-interpolation-filters="sRGB"><feTurbulence type="fractalNoise" baseFrequency="0.05 0.07" numOctaves="3" seed="7"/><feColorMatrix type="matrix" values="0 0 0 0 0.24  0 0 0 0 0.27  0 0 0 0 0.30  1.800 0 0 0 -0.700"/><feComposite in2="SourceGraphic" operator="in"/></filter><filter id="tb"><feGaussianBlur stdDeviation="1.500"/></filter><linearGradient id="tg" x1="0" y1="0" x2="1" y2="1"><stop offset="0" stop-color="#20242a"/><stop offset=".5" stop-color="#2e343b"/><stop offset="1" stop-color="#1b1e23"/></linearGradient></defs><rect width="128" height="128" fill="#fff"/><rect x="32" y="0" width="32" height="32" fill="#ebebeb"/><rect x="96" y="0" width="32" height="32" fill="#ebebeb"/><rect x="0" y="32" width="32" height="32" fill="#ebebeb"/><rect x="64" y="32" width="32" height="32" fill="#ebebeb"/><rect x="32" y="64" width="32" height="32" fill="#ebebeb"/><rect x="96" y="64" width="32" height="32" fill="#ebebeb"/><rect x="0" y="96" width="32" height="32" fill="#ebebeb"/><rect x="64" y="96" width="32" height="32" fill="#ebebeb"/><rect x="32" y="0" width="64" height="128" fill="#23272c"/><rect x="32" y="0" width="64" height="128" fill="#000" filter="url(#tn)"/><g transform="translate(32,0)"><path d="M6 0h58v2.200h-24q-6 .5-10 4.500t-9 3.300q-6-.5-9.500-3.500t-5.500-3z" fill="#060708"/><path d="M6 3v121M34.300 8v112" stroke="#15181b" stroke-width="1.100" fill="none"/><path d="M7.200 8v110M35.500 12v100" stroke="#353b41" stroke-width=".7" fill="none" opacity=".7"/><path d="M6 71h20.600" stroke="#14171a" stroke-width="1"/><path d="M6 72h20" stroke="#3a4046" stroke-width=".6"/><rect x="26.600" y="70.300" width="14.600" height="24.400" fill="#1c2024" stroke="#0c0e10" stroke-width="1"/><path d="M31 73v14M34 73v14M37 73v14" stroke="#090a0b" stroke-width="1.300"/><rect x="27.500" y="89.500" width="13" height="4.500" fill="#3d444b"/><path d="M26 122l6-11" stroke="#0c0e10" stroke-width="1"/><path d="M43 117.500h19" stroke="#474e55" stroke-width="2.500" stroke-dasharray="2 .8"/><path d="M12 20q10 8 20 2M38 50q12-8 24 2M10 100q6 6 14 0" stroke="#363c42" stroke-width="2.500" fill="none" opacity=".55" filter="url(#tb)"/><rect x="0" y="122" width="64" height="6" fill="#08090a"/><path d="M3 108v14" stroke="#0a0b0c" stroke-width="1.500"/></g></svg>
<div class="abs" style="left:1192px;top:234px;width:131px;height:14px;text-align:center;color:#fff"><span style="display:inline-block;transform:scaleX(.86);font-size:12px;line-height:14px">pl0014</span></div>
<div class="abs" style="left:1427px;top:98px;width:16px;height:150px;background:#f4f4f4"></div>
<svg class="abs" style="left:1427px;top:98px" width="16" height="150" viewBox="0 0 16 150"><path d="M4.500 11.500L8 7l3.500 4.500z" fill="#555"/><path d="M4.500 139.500L8 144l3.500-4.500z" fill="#555"/><rect x="1.500" y="19.500" width="13" height="13" rx="1.500" fill="#e4e4e4" stroke="#8a8a8a"/></svg>
<div class="abs" style="left:1192px;top:248px;width:251px;height:24px;background:#f0f0f0"></div>
<div class="abs" style="left:1192px;top:251px;width:153px;height:1px;background:#3c3c3c"></div>
<div class="abs" style="left:1392px;top:251px;width:51px;height:1px;background:#3c3c3c"></div>
<div class="abs" style="left:1345px;top:248px;width:47px;height:23px;background:#f6f6f6;border-right:1px solid #222;border-bottom:1px solid #222"></div>
<div class="abs" style="left:1203px;top:252px;width:17px;height:17px"><svg width="17" height="17" viewBox="0 0 17 17"><path d="M.5 3.500h5l1 1.500h7v8h-13z" fill="#f2ee5a" stroke="#555" stroke-width=".8"/><path d="M4 8.500h5" stroke="#d01818" stroke-width="2"/><path d="M8 5.500l3.500 3-3.500 3z" fill="#d01818"/><path d="M12 8l2 1-1.500 3 2 4M12.500 12l-2.500 3" stroke="#111" stroke-width="1.300" fill="none"/><circle cx="13" cy="6.500" r="1.600" fill="#f2ee1c" stroke="#111" stroke-width=".7"/></svg></div>
<div class="nar" style="left:1222px;top:254px">Ani...</div>
<div class="abs" style="left:1200px;top:254px;width:1px;height:14px;background:#8c8c8c"></div>
<div class="abs" style="left:1251px;top:252px;width:17px;height:17px"><svg width="17" height="17" viewBox="0 0 17 17"><path d="M1 3L16 15.500M16 3L1 15.500" stroke="#111" stroke-width="2.400"/><path d="M1 3L16 15.500M16 3L1 15.500" stroke="#eee" stroke-width=".8"/><path d="M4.500 6Q4.500 .8 8.500 .8t4 5.200q0 2.200-1.600 3v2.300h-4.800v-2.300Q4.500 8.200 4.500 6z" fill="#e8e8e8" stroke="#111" stroke-width="1"/><circle cx="6.800" cy="5.600" r="1.100" fill="#111"/><circle cx="10.200" cy="5.600" r="1.100" fill="#111"/></svg></div>
<div class="nar" style="left:1270px;top:254px">Sk...</div>
<div class="abs" style="left:1248px;top:254px;width:1px;height:14px;background:#8c8c8c"></div>
<div class="abs" style="left:1300px;top:252px;width:17px;height:17px"><svg width="17" height="17" viewBox="0 0 17 17"><path d="M1.500 3.500l3-2.500h8.500l-2.500 2.500z" fill="#e88" stroke="#b01010" stroke-width="1"/><path d="M1.500 3.500h9v9h-9z" fill="#d44" stroke="#b01010" stroke-width="1"/><rect x="4" y="5.500" width="9.500" height="8.500" rx="1.500" fill="#999" stroke="#b01010" stroke-width="1"/></svg></div>
<div class="nar" style="left:1319px;top:254px">Mo...</div>
<div class="abs" style="left:1297px;top:254px;width:1px;height:14px;background:#8c8c8c"></div>
<div class="abs" style="left:1347px;top:252px;width:17px;height:17px"><svg width="16" height="16" viewBox="0 0 16 16" shape-rendering="crispEdges"><rect x="1" y="1" width="14" height="14" fill="#d8d8d8"/><path d="M7 1h1v1h-1zM8 1h1v1h-1zM12 1h1v1h-1zM13 1h1v1h-1zM14 1h1v1h-1zM3 2h1v1h-1zM4 2h1v1h-1zM5 2h1v1h-1zM8 2h1v1h-1zM10 2h1v1h-1zM12 2h1v1h-1zM13 2h1v1h-1zM1 3h1v1h-1zM2 3h1v1h-1zM5 3h1v1h-1zM9 3h1v1h-1zM14 3h1v1h-1zM1 4h1v1h-1zM2 4h1v1h-1zM3 4h1v1h-1zM4 4h1v1h-1zM5 4h1v1h-1zM7 4h1v1h-1zM9 4h1v1h-1zM10 4h1v1h-1zM12 4h1v1h-1zM13 4h1v1h-1zM14 4h1v1h-1zM2 5h1v1h-1zM4 5h1v1h-1zM7 5h1v1h-1zM9 5h1v1h-1zM11 5h1v1h-1zM12 5h1v1h-1zM13 5h1v1h-1zM1 6h1v1h-1zM5 6h1v1h-1zM6 6h1v1h-1zM9 6h1v1h-1zM13 6h1v1h-1zM1 7h1v1h-1zM2 7h1v1h-1zM5 7h1v1h-1zM8 7h1v1h-1zM9 7h1v1h-1zM10 7h1v1h-1zM11 7h1v1h-1zM12 7h1v1h-1zM1 8h1v1h-1zM2 8h1v1h-1zM5 8h1v1h-1zM6 8h1v1h-1zM9 8h1v1h-1zM10 8h1v1h-1zM11 8h1v1h-1zM13 8h1v1h-1zM14 8h1v1h-1zM2 9h1v1h-1zM7 9h1v1h-1zM8 9h1v1h-1zM9 9h1v1h-1zM11 9h1v1h-1zM12 9h1v1h-1zM2 10h1v1h-1zM3 10h1v1h-1zM5 10h1v1h-1zM6 10h1v1h-1zM7 10h1v1h-1zM8 10h1v1h-1zM9 10h1v1h-1zM13 10h1v1h-1zM14 10h1v1h-1zM1 11h1v1h-1zM2 11h1v1h-1zM5 11h1v1h-1zM11 11h1v1h-1zM13 11h1v1h-1zM14 11h1v1h-1zM3 12h1v1h-1zM7 12h1v1h-1zM9 12h1v1h-1zM11 12h1v1h-1zM1 13h1v1h-1zM5 13h1v1h-1zM13 13h1v1h-1zM2 14h1v1h-1zM6 14h1v1h-1zM10 14h1v1h-1z" fill="#222"/></svg></div>
<div class="nar" style="left:1366px;top:254px">Te...</div>
<div class="abs" style="left:1394px;top:252px;width:17px;height:17px"><svg width="17" height="17" viewBox="0 0 17 17"><circle cx="2.500" cy="9" r="1.500" fill="none" stroke="#111" stroke-width="1"/><path d="M4 9h6" stroke="#111" stroke-width="1.300"/><circle cx="12.500" cy="9" r="2.800" fill="none" stroke="#111" stroke-width="1.200"/></svg></div>
<div class="nar" style="left:1413px;top:254px">Sc...</div>
<div class="abs" style="left:1391px;top:254px;width:1px;height:14px;background:#8c8c8c"></div>
<div class="abs" style="left:1441px;top:254px;width:1px;height:14px;background:#8c8c8c"></div>
<div class="abs" style="left:1192px;top:272px;width:251px;height:1px;background:#a0a0a0"></div>
<div class="abs" style="left:1192px;top:273px;width:251px;height:4px;background:#fff"></div>
<div class="abs" style="left:1442px;top:270px;width:1px;height:7px;background:#6a6a6a"></div>
<div class="hd" style="top:277px"><div class="abs" style="left:2px;top:2px;width:16px;height:16px"><svg width="16" height="16" viewBox="0 0 16 16"><path d="M1.500 7.500l5-4 2 1.500 2.500-1v2l2 1.500v6h-11.500z" fill="#fff" stroke="#111" stroke-width="1"/><path d="M3.500 9.500h6M3.500 11.500h6" stroke="#111" stroke-width=".9"/><rect x="11" y="0" width="4.500" height="4.500" fill="#1a1ad8"/><path d="M9 5.500l3-3" stroke="#e02020" stroke-width="1.200"/></svg></div><div class="nar" style="left:21px;top:4px">Properties</div><div class="hbtn" style="left:220px"><svg width="11" height="12" viewBox="0 0 11 12" style="position:absolute;left:0;top:0"><path d="M0 6h4M4 2.500v7M4 4h5M4 8h5M8.500 2.500v7M4 7h5" stroke="#111" stroke-width="1" fill="none" shape-rendering="crispEdges"/></svg></div><div class="hbtn" style="left:234px"><svg width="11" height="12" viewBox="0 0 11 12" style="position:absolute;left:0;top:0"><path d="M2.500 3.500l5 5M7.500 3.500l-5 5" stroke="#111" stroke-width="1.700" fill="none"/></svg></div></div>
<svg class="abs" style="left:1266px;top:282px" width="138" height="12" viewBox="0 0 138 12"><g stroke="#b9b9b9" stroke-width="1" fill="none" shape-rendering="crispEdges"><path d="M1.5 3.5v-2.500h2.500"/><path d="M6.5 8.5v-2.500h2.500"/><path d="M11.5 3.5v-2.500h2.500"/><path d="M16.5 8.5v-2.500h2.500"/><path d="M21.5 3.5v-2.500h2.500"/><path d="M26.5 8.5v-2.500h2.500"/><path d="M31.5 3.5v-2.500h2.500"/><path d="M36.5 8.5v-2.500h2.500"/><path d="M41.5 3.5v-2.500h2.500"/><path d="M46.5 8.5v-2.500h2.500"/><path d="M51.5 3.5v-2.500h2.500"/><path d="M56.5 8.5v-2.500h2.500"/><path d="M61.5 3.5v-2.500h2.500"/><path d="M66.5 8.5v-2.500h2.500"/><path d="M71.5 3.5v-2.500h2.500"/><path d="M76.5 8.5v-2.500h2.500"/><path d="M81.5 3.5v-2.500h2.500"/><path d="M86.5 8.5v-2.500h2.500"/><path d="M91.5 3.5v-2.500h2.500"/><path d="M96.5 8.5v-2.500h2.500"/><path d="M101.5 3.5v-2.500h2.500"/><path d="M106.5 8.5v-2.500h2.500"/><path d="M111.5 3.5v-2.500h2.500"/><path d="M116.5 8.5v-2.500h2.500"/><path d="M121.5 3.5v-2.500h2.500"/><path d="M126.5 8.5v-2.500h2.500"/><path d="M131.5 3.5v-2.500h2.500"/></g></svg>
<div class="abs" style="left:1192px;top:299px;width:252px;height:133px;background:#fff"></div>
<div class="abs" style="left:1195px;top:303px;width:9px;height:9px;border:1px solid #919191;background:#fff"></div><div class="abs" style="left:1197px;top:307px;width:5px;height:1px;background:#333"></div>
<div class="abs" style="left:1209.500px;top:299px;font-size:14px;line-height:16px;font-weight:bold">Texture</div>
<div class="hl" style="left:1204px;top:315px;width:240px"></div>
<div class="abs" style="left:1219px;top:332px;width:98px;height:15px;background:#ededed"></div>
<div class="p13" style="left:1221px;top:315.5px;color:#000">Name</div>
<div class="p13" style="left:1318.500px;top:316px;color:#000">pl0014</div>
<div class="hl" style="left:1218px;top:331px;width:226px"></div>
<div class="p13" style="left:1221px;top:331.5px;color:#000">Path</div>
<div class="hl" style="left:1218px;top:347px;width:226px"></div>
<div class="p13" style="left:1221px;top:347.5px;color:#8a8a8a">Width</div>
<div class="p13" style="left:1318.500px;top:348px;color:#8a8a8a">128</div>
<div class="hl" style="left:1218px;top:363px;width:226px"></div>
<div class="p13" style="left:1221px;top:363.5px;color:#8a8a8a">Height</div>
<div class="p13" style="left:1318.500px;top:364px;color:#8a8a8a">256</div>
<div class="hl" style="left:1218px;top:379px;width:226px"></div>
<div class="abs" style="left:1318px;top:332px;width:111px;height:15px;overflow:hidden"><div class="p13" style="right:1px;top:0;letter-spacing:-.1px">ка (12)\pl0014.bmp</div></div>
<div class="vl" style="left:1218px;top:316px;height:64px"></div><div class="vl" style="left:1317px;top:316px;height:64px"></div>
<div class="abs" style="left:1429px;top:333px;width:14px;height:14px;border:1px solid #707070;border-radius:2px;background:#e8e8e8"><div class="abs" style="left:2px;top:8px;width:2px;height:2px;background:#111;box-shadow:3px 0 #111,6px 0 #111"></div></div>
<div class="abs" style="left:1192px;top:432px;width:251px;height:1px;background:#6a6a6a"></div>
<div class="abs" style="left:1192px;top:433px;width:251px;height:4px;background:#f0f0f0"></div>
<div class="abs" style="left:1442px;top:428px;width:1px;height:5px;background:#6a6a6a"></div>
<div class="abs" style="left:1192px;top:437px;width:252px;height:34px;background:#fff"></div>
<div class="p13" style="left:1195px;top:438px">Location of the texture image.&nbsp; This</div>
<div class="p13" style="left:1195px;top:454px">path can be relative to the file path of</div>
<div class="abs" style="left:1427px;top:437px;width:16px;height:34px;background:#f6f6f6"></div>
<svg class="abs" style="left:1427px;top:437px" width="16" height="34" viewBox="0 0 16 34"><path d="M5.500 10.500L8.500 6.500l3 4z" fill="#555"/><path d="M5.500 23.500L8.500 27.500l3-4z" fill="#555"/></svg>
<div class="abs" style="left:1192px;top:471px;width:251px;height:6px;background:#f0f0f0"></div>
<div class="abs" style="left:1192px;top:473px;width:251px;height:1px;background:#6a6a6a"></div>
<div class="abs" style="left:1442px;top:468px;width:1px;height:6px;background:#6a6a6a"></div>
<div class="hd" style="top:478px"><div class="abs" style="left:2px;top:2px;width:16px;height:16px"><svg width="16" height="16" viewBox="0 0 16 16"><path d="M2.500 14.500L10 5.500" stroke="#111" stroke-width="2.400"/><path d="M7 2.500q3.500-3 7.500 1l-1.500 2-1.500-1.200-2 1.700z" fill="#8a861a" stroke="#111" stroke-width=".8"/><path d="M13.500 14.500L5 5.500" stroke="#111" stroke-width="2.400"/><path d="M1 3.500q0-2 2-2.500v2l1.500 .8 1.500-1.300q.8 2-1 3.200t-3-.2z" fill="#111"/></svg></div><div class="nar" style="left:21px;top:4px">Tools</div><div class="hbtn" style="left:220px"><svg width="11" height="12" viewBox="0 0 11 12" style="position:absolute;left:0;top:0"><path d="M0 6h4M4 2.500v7M4 4h5M4 8h5M8.500 2.500v7M4 7h5" stroke="#111" stroke-width="1" fill="none" shape-rendering="crispEdges"/></svg></div><div class="hbtn" style="left:234px"><svg width="11" height="12" viewBox="0 0 11 12" style="position:absolute;left:0;top:0"><path d="M2.500 3.500l5 5M7.500 3.500l-5 5" stroke="#111" stroke-width="1.700" fill="none"/></svg></div></div>
<svg class="abs" style="left:1244px;top:483px" width="160" height="12" viewBox="0 0 160 12"><g stroke="#b9b9b9" stroke-width="1" fill="none" shape-rendering="crispEdges"><path d="M1.5 3.5v-2.500h2.500"/><path d="M6.5 8.5v-2.500h2.500"/><path d="M11.5 3.5v-2.500h2.500"/><path d="M16.5 8.5v-2.500h2.500"/><path d="M21.5 3.5v-2.500h2.500"/><path d="M26.5 8.5v-2.500h2.500"/><path d="M31.5 3.5v-2.500h2.500"/><path d="M36.5 8.5v-2.500h2.500"/><path d="M41.5 3.5v-2.500h2.500"/><path d="M46.5 8.5v-2.500h2.500"/><path d="M51.5 3.5v-2.500h2.500"/><path d="M56.5 8.5v-2.500h2.500"/><path d="M61.5 3.5v-2.500h2.500"/><path d="M66.5 8.5v-2.500h2.500"/><path d="M71.5 3.5v-2.500h2.500"/><path d="M76.5 8.5v-2.500h2.500"/><path d="M81.5 3.5v-2.500h2.500"/><path d="M86.5 8.5v-2.500h2.500"/><path d="M91.5 3.5v-2.500h2.500"/><path d="M96.5 8.5v-2.500h2.500"/><path d="M101.5 3.5v-2.500h2.500"/><path d="M106.5 8.5v-2.500h2.500"/><path d="M111.5 3.5v-2.500h2.500"/><path d="M116.5 8.5v-2.500h2.500"/><path d="M121.5 3.5v-2.500h2.500"/><path d="M126.5 8.5v-2.500h2.500"/><path d="M131.5 3.5v-2.500h2.500"/><path d="M136.5 8.5v-2.500h2.500"/><path d="M141.5 3.5v-2.500h2.500"/><path d="M146.5 8.5v-2.500h2.500"/><path d="M151.5 3.5v-2.500h2.500"/><path d="M156.5 8.5v-2.500h2.500"/></g></svg>
<div class="abs" style="left:1192px;top:500px;width:251px;height:53px;background:#f0f0f0"></div>
<svg class="abs" style="left:1196px;top:505px" width="16" height="16" viewBox="0 0 16 16"><rect x="3.500" y="1.500" width="9" height="4" fill="#fff" stroke="#222" stroke-width="1"/><rect x="1.500" y="5.500" width="9" height="4" fill="#fff" stroke="#222" stroke-width="1"/><path d="M5 3.500h3M3 7.500h3" stroke="#222" stroke-width=".8"/><path d="M2 9.500v3q0 1.500 3 1.500h6" stroke="#222" stroke-width="1.200" fill="none"/><path d="M10 12l3 2-3 2z" fill="#222"/><path d="M12.500 5.500v4h-9" stroke="#222" stroke-width="1" fill="none"/></svg>
<svg class="abs" style="left:1217px;top:505px" width="16" height="16" viewBox="0 0 16 16"><rect x="3.500" y="1.500" width="9" height="4" fill="#fff" stroke="#222" stroke-width="1"/><rect x="1.500" y="5.500" width="9" height="4" fill="#fff" stroke="#222" stroke-width="1"/><path d="M5 3.500h3M3 7.500h3" stroke="#222" stroke-width=".8"/><path d="M4 13h9" stroke="#111" stroke-width="1.400"/><path d="M11.500 10.500l4 2.500-4 2.500z" fill="#111"/></svg>
<svg class="abs" style="left:1241px;top:505px" width="16" height="16" viewBox="0 0 16 16"><g transform="translate(1,1)"><rect x="3.500" y="1.500" width="9" height="4" fill="#fff" stroke="#222" stroke-width="1"/><rect x="1.500" y="5.500" width="9" height="4" fill="#fff" stroke="#222" stroke-width="1"/><path d="M5 3.500h3M3 7.500h3" stroke="#222" stroke-width=".8"/></g><path d="M0 13.500h16" stroke="#f2ee1c" stroke-width="2.200"/><path d="M0 13.500h16" stroke="#8a8a1a" stroke-width=".8" stroke-dasharray="1 1"/></svg>
<div class="abs" style="left:1263px;top:504px;width:1px;height:18px;background:#8c8c8c"></div>
<div class="abs" style="left:1269px;top:503px;width:22px;height:20px;border:1px solid #6e6e6e;border-radius:3px;background:#dadada;box-shadow:inset 0 1px 0 #b8b8b8"></div>
<svg class="abs" style="left:1272px;top:505px" width="16" height="16" viewBox="0 0 16 16"><g transform="scale(.78)"><path d="M2.500 14.500L10 5.500" stroke="#111" stroke-width="2.400"/><path d="M7 2.500q3.500-3 7.500 1l-1.500 2-1.500-1.200-2 1.700z" fill="#8a861a" stroke="#111" stroke-width=".8"/><path d="M13.500 14.500L5 5.500" stroke="#111" stroke-width="2.400"/><path d="M1 3.500q0-2 2-2.500v2l1.500 .8 1.500-1.300q.8 2-1 3.200t-3-.2z" fill="#111"/></g><rect x="10" y="9" width="5" height="6" fill="#e8e8e8" stroke="#888" stroke-width=".6"/><path d="M13.500 10.200h-2v1.600h1.600v1.800h-1.800" stroke="#111" stroke-width=".8" fill="none"/></svg>
<svg class="abs" style="left:1296px;top:505px" width="16" height="16" viewBox="0 0 16 16"><path d="M1 1.500h5M3.500 1.500v13M3.500 5.500h3M3.500 10h3M3.500 14.500h3" stroke="#111" stroke-width="1.300" fill="none"/><path d="M8 5.500h5M8 8h5M8 10.500h5" stroke="#111" stroke-width="1.200"/></svg>
<svg class="abs" style="left:1318px;top:504px" width="17" height="17" viewBox="0 0 17 17"><g transform="scale(1.050)"><path d="M2.500 14.500L10 5.500" stroke="#111" stroke-width="2.400"/><path d="M7 2.500q3.500-3 7.500 1l-1.500 2-1.500-1.200-2 1.700z" fill="#8a861a" stroke="#111" stroke-width=".8"/><path d="M13.500 14.500L5 5.500" stroke="#111" stroke-width="2.400"/><path d="M1 3.500q0-2 2-2.500v2l1.500 .8 1.500-1.300q.8 2-1 3.200t-3-.2z" fill="#111"/></g></svg>
<svg class="abs" style="left:1341px;top:504px" width="17" height="17" viewBox="0 0 17 17"><path d="M4.500 0v6" stroke="#d01818" stroke-width="2.200"/><path d="M1 5.500h7l-3.500 4.500z" fill="#d01818"/><g fill="#fff" stroke="#111" stroke-width="1"><rect x="1.500" y="11.500" width="3.500" height="3.500"/><rect x="6.500" y="11.500" width="3.500" height="3.500"/><rect x="11.500" y="11.500" width="3.500" height="3.500"/></g></svg>
<div class="abs" style="left:1363px;top:504px;width:1px;height:18px;background:#8c8c8c"></div>
<svg class="abs" style="left:1372px;top:505px" width="16" height="16" viewBox="0 0 16 16"><path d="M0 8l6-5.500v3.500h9v4h-9v3.500z" fill="#a8a8a8"/></svg>
<svg class="abs" style="left:1394px;top:505px" width="16" height="16" viewBox="0 0 16 16"><path d="M16 8l-6-5.500v3.500h-9v4h9v3.500z" fill="#a8a8a8"/></svg>
<div class="abs" style="left:1193px;top:529px;width:250px;height:19px;background:#fff;border:1px solid #e2e2e2;border-radius:2px"></div>
<div class="nar" style="left:1198.500px;top:531px">Select</div>
<svg class="abs" style="left:1429px;top:536px" width="10" height="6" viewBox="0 0 10 6"><path d="M.5 .5h9L5 5.500z" fill="#111"/></svg>
<div class="abs" style="left:1192px;top:553px;width:252px;height:101px;background:#fff"></div>
<svg class="abs" style="left:1192px;top:555px" width="16" height="16" viewBox="0 0 16 16"><rect x="0.5" y="7.5" width="2.600" height="2.600" fill="#e8ffe8" stroke="#1a9a1a" stroke-width="1"/><rect x="7.5" y="0.5" width="2.600" height="2.600" fill="#e8ffe8" stroke="#1a9a1a" stroke-width="1"/><rect x="12" y="10" width="2.600" height="2.600" fill="#e8ffe8" stroke="#1a9a1a" stroke-width="1"/></svg>
<div class="nar" style="left:1210.5px;top:556px">Select Vertex</div>
<svg class="abs" style="left:1192px;top:572px" width="16" height="16" viewBox="0 0 16 16"><path d="M2 10.500L9 2l5 10z" fill="#c0c0c0" stroke="#666" stroke-width=".8"/><rect x="0.5" y="9" width="2.600" height="2.600" fill="#e8ffe8" stroke="#1a9a1a" stroke-width="1"/><rect x="7.5" y="0.5" width="2.600" height="2.600" fill="#e8ffe8" stroke="#1a9a1a" stroke-width="1"/><rect x="12.5" y="10.5" width="2.600" height="2.600" fill="#e8ffe8" stroke="#1a9a1a" stroke-width="1"/></svg>
<div class="nar" style="left:1210.5px;top:573px">Select Face</div>
<svg class="abs" style="left:1192px;top:589px" width="16" height="16" viewBox="0 0 16 16"><path d="M3.500 3L8 8.500l5-1.500M8 8.500L5.500 13.500" stroke="#111" stroke-width="1.500" fill="none"/><circle cx="3.500" cy="3" r="1.500" fill="#ffffa0" stroke="#888a10" stroke-width=".8"/><circle cx="13" cy="7" r="1.500" fill="#ffffa0" stroke="#888a10" stroke-width=".8"/><circle cx="5.500" cy="13.500" r="1.500" fill="#ffffa0" stroke="#888a10" stroke-width=".8"/></svg>
<div class="nar" style="left:1210.5px;top:590px">Select Group</div>
<svg class="abs" style="left:1192px;top:606px" width="16" height="16" viewBox="0 0 16 16"><g stroke="#111" stroke-width=".9" fill="#fff"><path d="M3 10.400L10 3.400Q9 1.400 10.800 1Q12.400.8 12.400 2.400Q14.200 2.400 13.800 4.100Q13.400 5.600 11.600 5L4.600 12Q5.400 14 3.700 14.400Q2.100 14.600 2.100 13Q.4 13 .900 11.300Q1.400 9.800 3 10.400z"/></g></svg>
<div class="nar" style="left:1210.5px;top:607px">Select Bone</div>
<svg class="abs" style="left:1288px;top:555px" width="16" height="16" viewBox="0 0 16 16"><path d="M5 5q0-3.200 3.200-3.200t3.200 2.800q0 1.600-1.600 2.600t-1.600 2.600" stroke="#222" stroke-width="3" fill="none"/><path d="M5 5q0-3.200 3.200-3.200t3.200 2.800q0 1.600-1.600 2.600t-1.600 2.600" stroke="#f2e61c" stroke-width="1.600" fill="none"/><circle cx="8.2" cy="13.6" r="1.500" fill="#f2e61c" stroke="#222" stroke-width=".7"/><rect x="0.5" y="8" width="2.600" height="2.600" fill="#e8ffe8" stroke="#1a9a1a" stroke-width="1"/><rect x="12.5" y="9.5" width="2.600" height="2.600" fill="#e8ffe8" stroke="#1a9a1a" stroke-width="1"/></svg>
<div class="nar" style="left:1306.5px;top:556px">Vertex Info</div>
<svg class="abs" style="left:1288px;top:572px" width="16" height="16" viewBox="0 0 16 16"><path d="M2 11L8 4l5 8z" fill="#c0c0c0"/><path d="M5 5q0-3.200 3.200-3.200t3.200 2.800q0 1.600-1.600 2.600t-1.600 2.600" stroke="#222" stroke-width="3" fill="none"/><path d="M5 5q0-3.200 3.200-3.200t3.200 2.800q0 1.600-1.600 2.600t-1.600 2.600" stroke="#f2e61c" stroke-width="1.600" fill="none"/><circle cx="8.2" cy="13.6" r="1.500" fill="#f2e61c" stroke="#222" stroke-width=".7"/><rect x="0.5" y="9" width="2.600" height="2.600" fill="#e8ffe8" stroke="#1a9a1a" stroke-width="1"/><rect x="6.5" y="0.5" width="2.600" height="2.600" fill="#e8ffe8" stroke="#1a9a1a" stroke-width="1"/><rect x="12.5" y="10.5" width="2.600" height="2.600" fill="#e8ffe8" stroke="#1a9a1a" stroke-width="1"/></svg>
<div class="nar" style="left:1306.5px;top:573px">Face Info</div>
<svg class="abs" style="left:1288px;top:589px" width="16" height="16" viewBox="0 0 16 16"><g transform="translate(-1,2) scale(.8)"><g stroke="#111" stroke-width=".9" fill="#fff"><path d="M3 10.400L10 3.400Q9 1.400 10.800 1Q12.400.8 12.400 2.400Q14.200 2.400 13.800 4.100Q13.400 5.600 11.600 5L4.600 12Q5.400 14 3.700 14.400Q2.100 14.600 2.100 13Q.4 13 .900 11.300Q1.400 9.800 3 10.400z"/></g></g><path d="M7 4.5q0-3.200 3.200-3.200t3.200 2.800q0 1.600-1.600 2.600t-1.600 2.600" stroke="#222" stroke-width="3" fill="none"/><path d="M7 4.5q0-3.200 3.200-3.200t3.200 2.800q0 1.600-1.600 2.600t-1.600 2.600" stroke="#f2e61c" stroke-width="1.600" fill="none"/><circle cx="10.2" cy="13.1" r="1.500" fill="#f2e61c" stroke="#222" stroke-width=".7"/></svg>
<div class="nar" style="left:1306.5px;top:590px">Bone Info</div>
<div class="abs" style="left:1192px;top:654px;width:251px;height:6px;background:#f0f0f0"></div>
<div class="abs" style="left:1192px;top:660px;width:252px;height:128px;background:#fff"></div>
<div class="p13" style="left:1208.500px;top:659.500px">no properties</div>
<div class="hl" style="left:1204px;top:675px;width:240px"></div><div class="vl" style="left:1204px;top:660px;height:15px"></div><div class="vl" style="left:1307px;top:660px;height:15px"></div>
<!-- bottom dock panel -->
<div class="abs" style="left:8px;top:755px;width:1178px;height:2px;background:#fff"></div>
<div class="abs" style="left:8px;top:757px;width:1178px;height:3px;background:#f0f0f0"></div>
<div class="abs" style="left:8px;top:760px;width:1176px;height:1px;background:#c0c0c0"></div>
<div class="abs" style="left:8px;top:761px;width:1177px;height:1px;background:#666"></div><div class="abs" style="left:1184px;top:755px;width:1px;height:7px;background:#666"></div>
<div class="abs" style="left:8px;top:762px;width:1177px;height:60px;background:#f0f0f0"></div>
<div class="abs" style="left:29px;top:761px;width:1px;height:61px;background:#e0e0e0"></div>
<div class="abs" style="left:30px;top:806px;width:1139px;height:16px;background:#ececec;border-top:1px solid #e2e2e2"></div>
<div class="abs" style="left:1169px;top:762px;width:16px;height:44px;background:#ededed;border-left:1px solid #e2e2e2"></div>
<svg class="abs" style="left:8px;top:761px" width="1178" height="61" viewBox="0 0 1178 61">
<g fill="#f0f0f0" stroke-width="1"><path d="M4.500 17.500v-13h13" stroke="#fff" fill="none"/><path d="M4.500 17.500h13v-13" stroke="#555" fill="none"/><path d="M4.500 32.500v-13h13" stroke="#fff" fill="none"/><path d="M4.500 32.500h13v-13" stroke="#555" fill="none"/></g>
<path d="M8.500 8.500l5 5M13.500 8.500l-5 5" stroke="#111" stroke-width="1.700"/>
<path d="M6 26h4M10 22.500v7M10 24h5M10 28h5M14.500 22.500v7M10 27h5" stroke="#111" stroke-width="1" fill="none" shape-rendering="crispEdges"/>
<g stroke="#b9b9b9" fill="none" shape-rendering="crispEdges"><path d="M6.500 39.500v-2.500h2.500M12.500 44.500v-2.500h2.500M6.500 49.500v-2.500h2.500M12.500 54.500v-2.500h2.500"/></g>
<path d="M33 56.500l-4-4 4-4z" fill="#8c8c8c"/><path d="M1149 48.500l4 4-4 4z" fill="#8c8c8c"/>
<path d="M1165.500 12.500l3.500-4 3.500 4z" fill="#8c8c8c"/><path d="M1165.500 33.500l3.500 4 3.500-4z" fill="#8c8c8c"/>
</svg>
<div class="abs" style="left:8px;top:822px;width:1436px;height:1px;background:#7c7c7c"></div>
<div class="abs" style="left:1185px;top:820px;width:7px;height:2px;background:#777;clip-path:polygon(0 100%,25% 0,100% 0,100% 100%)"></div>
<div class="abs" style="left:8px;top:823px;width:1436px;height:4px;background:#fff"></div>
<div class="abs" style="left:8px;top:827px;width:1436px;height:1px;background:#858585"></div>
<!-- area below right dock -->
<div class="abs" style="left:1192px;top:782px;width:252px;height:4px;background:#ececec"></div>
<div class="abs" style="left:1192px;top:786px;width:252px;height:1px;background:#6a6a6a"></div>
<div class="abs" style="left:1192px;top:787px;width:252px;height:35px;background:#f0f0f0"></div>
<!-- frame bar -->
<div class="abs" style="left:8px;top:828px;width:1436px;height:27px;background:#f0f0f0"></div>
<div class="nar" style="left:15.500px;top:835px">Frame</div>
<div class="abs" style="left:62px;top:836px;width:1157px;height:9px;background:#a0a0a0"></div>
<svg class="abs" style="left:56px;top:830px" width="12" height="19" viewBox="0 0 12 19"><path d="M1.500 1.500q0-1 1-1h6q1 0 1 1v11.500l-4 4.500-4-4.500z" fill="#fff" stroke="#222" stroke-width="1"/></svg>
<div class="abs" style="left:1226px;top:831px;width:40px;height:19px;background:#f0f0f0;border:1px solid #555"></div>
<div class="nar" style="left:1228.500px;top:834px;color:#999;font-size:13px">1</div>
<div class="abs" style="left:8px;top:855px;width:1436px;height:1px;background:#8c8c8c"></div>
<!-- status bar -->
<div class="abs" style="left:8px;top:856px;width:1436px;height:21px;background:#f1eeee"></div>
<div class="abs" style="left:968px;top:858px;width:1px;height:19px;background:#d8d6d6"></div>
<div class="abs" style="left:1118px;top:858px;width:1px;height:19px;background:#d8d6d6"></div>
<div class="abs" style="left:1243px;top:858px;width:1px;height:19px;background:#d8d6d6"></div>
<div class="abs" style="left:1123.500px;top:861px;font-size:12px;line-height:14px;letter-spacing:-.09px;white-space:nowrap">mouse: Default</div>
<div class="abs" style="left:1249px;top:861px;font-size:13px;line-height:14px;white-space:nowrap;transform:scaleX(.83);transform-origin:0 0">x: 99,99, y: 0,00, z: -100,14</div>
<svg class="abs" style="left:1432px;top:865px" width="12" height="12" viewBox="0 0 12 12"><g fill="#b8b8b8"><rect x="8" y="1" width="2" height="2"/><rect x="5" y="4" width="2" height="2"/><rect x="8" y="4" width="2" height="2"/><rect x="2" y="7" width="2" height="2"/><rect x="5" y="7" width="2" height="2"/><rect x="8" y="7" width="2" height="2"/></g></svg>
<!-- taskbar -->
<div class="abs" style="left:8px;top:877px;width:1444px;height:9px;background:linear-gradient(#454545 0,#454545 1px,#8e8e8e 1px,#7c7c7c 4px,#686868 9px)"></div>
<div class="abs" style="left:170px;top:880px;width:156px;height:8px;border:1px solid #a8a8a8;border-radius:3px 3px 0 0;background:#8a8a8a"></div>
<div class="abs" style="left:330px;top:880px;width:156px;height:8px;border:1px solid #a8a8a8;border-radius:3px 3px 0 0;background:#8a8a8a"></div>
<div class="abs" style="left:490px;top:880px;width:156px;height:8px;border:1px solid #a8a8a8;border-radius:3px 3px 0 0;background:#8a8a8a"></div>
<div class="abs" style="left:650px;top:880px;width:156px;height:8px;border:1px solid #222;border-radius:3px 3px 0 0;background:#383838"></div>
<div class="abs" style="left:17.500px;top:873.500px;width:40px;height:40px;border-radius:50%;border:1.500px solid #182838;background:radial-gradient(circle at 50% 35%,#c9d7df 0,#a3b7c4 45%,#71899b 80%);overflow:hidden"><div class="abs" style="left:11px;top:6.500px;width:10px;height:12px;background:linear-gradient(#f08a3a,#e0501e);border-radius:4px 1px 0 0;transform:skewY(-10deg)"></div><div class="abs" style="left:23px;top:8.500px;width:10px;height:12px;background:linear-gradient(#8cc83a,#4a9a22);border-radius:1px 4px 0 0;transform:skewY(-10deg)"></div></div>
<div class="abs" style="left:96px;top:884px;width:9px;height:3px;background:#2a6ad0"></div>
<div class="abs" style="left:120px;top:885px;width:14px;height:2px;background:#9aa4b0"></div>
<div class="abs" style="left:154px;top:884px;width:2px;height:2px;background:#eee;box-shadow:3px 0 #eee"></div>
<div class="abs" style="left:492px;top:884px;width:6px;height:3px;background:#5a6ab0;border-radius:2px 2px 0 0"></div>
<div class="abs" style="left:1324px;top:884px;width:3px;height:2px;background:#3ac82a;box-shadow:4px 0 #3ac82a"></div>
<div class="abs" style="left:1342px;top:883px;width:12px;height:4px;background:#e02a2a;border-radius:4px 4px 0 0"></div>
<div class="abs" style="left:1372px;top:883px;width:9px;height:4px;border:1px solid #eee;background:#2a4a9a"></div>
<div class="abs" style="left:1390px;top:883px;width:3px;height:3px;background:#eee"></div>
<div class="abs" style="left:1397px;top:885px;width:2px;height:1px;background:#eee"></div>
<!-- ICQ popup -->
<div class="abs" id="icq" style="left:1240px;top:772px;width:201px;height:97px;border:1px solid #56614e;border-radius:4px;background:linear-gradient(#a6d88c 0,#8ccc64 5px,#62b436 13px,#4ca422 21px,#55ac2a 23px,#5cb030 70px,#d9e2c6 74px,#e3e8d6 84px,#d6ddc6 97px);overflow:hidden">
 <div class="abs" style="left:0;top:0;width:199px;height:10px;background:linear-gradient(rgba(255,255,255,.35),rgba(255,255,255,.1))"></div>
 <div class="abs" style="left:0px;top:72px;width:199px;height:24px;background:linear-gradient(#dfe6ce,#e3e8d8 50%,#d4dcc4)"></div>
 <svg class="abs" style="left:2px;top:2px" width="17" height="17" viewBox="0 0 17 17"><g fill="#7ed43c" stroke="#3a8a1a" stroke-width=".8"><ellipse cx="8.500" cy="3.600" rx="2.300" ry="3"/><ellipse cx="8.500" cy="13.400" rx="2.300" ry="3"/><ellipse cx="3.600" cy="8.500" rx="3" ry="2.300"/><ellipse cx="13.400" cy="8.500" rx="3" ry="2.300"/><ellipse cx="5" cy="5" rx="2.300" ry="3" transform="rotate(-45 5 5)"/><ellipse cx="12" cy="5" rx="2.300" ry="3" transform="rotate(45 12 5)"/><ellipse cx="5" cy="12" rx="2.300" ry="3" transform="rotate(45 5 12)"/><ellipse cx="12" cy="12" rx="2.300" ry="3" transform="rotate(-45 12 12)"/></g><circle cx="8.500" cy="8.500" r="2.200" fill="#f4f01e"/></svg>
 <div class="abs" style="left:22.500px;top:2px;font-size:13px;line-height:16px;font-weight:bold;color:#fff;white-space:nowrap;text-shadow:0 1px 1px rgba(40,80,20,.7)">Контакт в сети</div>
 <svg class="abs" style="left:185px;top:6px" width="10" height="9" viewBox="0 0 10 9"><path d="M1 1l8 7M9 1L1 8" stroke="#3e463a" stroke-width="2.200"/></svg>
 <div class="abs" style="left:3px;top:23px;width:194px;height:50px;border:1px solid #b4d49c;border-radius:3px;background:#f5f5f5"></div>
 <svg class="abs" style="left:10px;top:27px" width="34" height="42" viewBox="0 0 34 42"><defs><linearGradient id="avb" x1="0" y1="0" x2="0" y2="1"><stop offset="0" stop-color="#c4d4d6"/><stop offset="1" stop-color="#b0c0c2"/></linearGradient></defs><rect width="34" height="42" fill="url(#avb)"/><path d="M0 42V30q1-6 7-8V12q0-9 10-9t10 9v10q6 2 7 8v12z" fill="#486064"/><g font-family="Liberation Sans,sans-serif" font-size="6" fill="#fff" text-anchor="middle"><text x="17" y="15">No</text><text x="17" y="23">Photo</text><text x="17" y="31">Available</text></g></svg>
 <div class="abs" style="left:53.500px;top:28px;font-size:11px;line-height:14px;color:#333;white-space:nowrap">stalker в сети</div>
</div>
</body></html>
